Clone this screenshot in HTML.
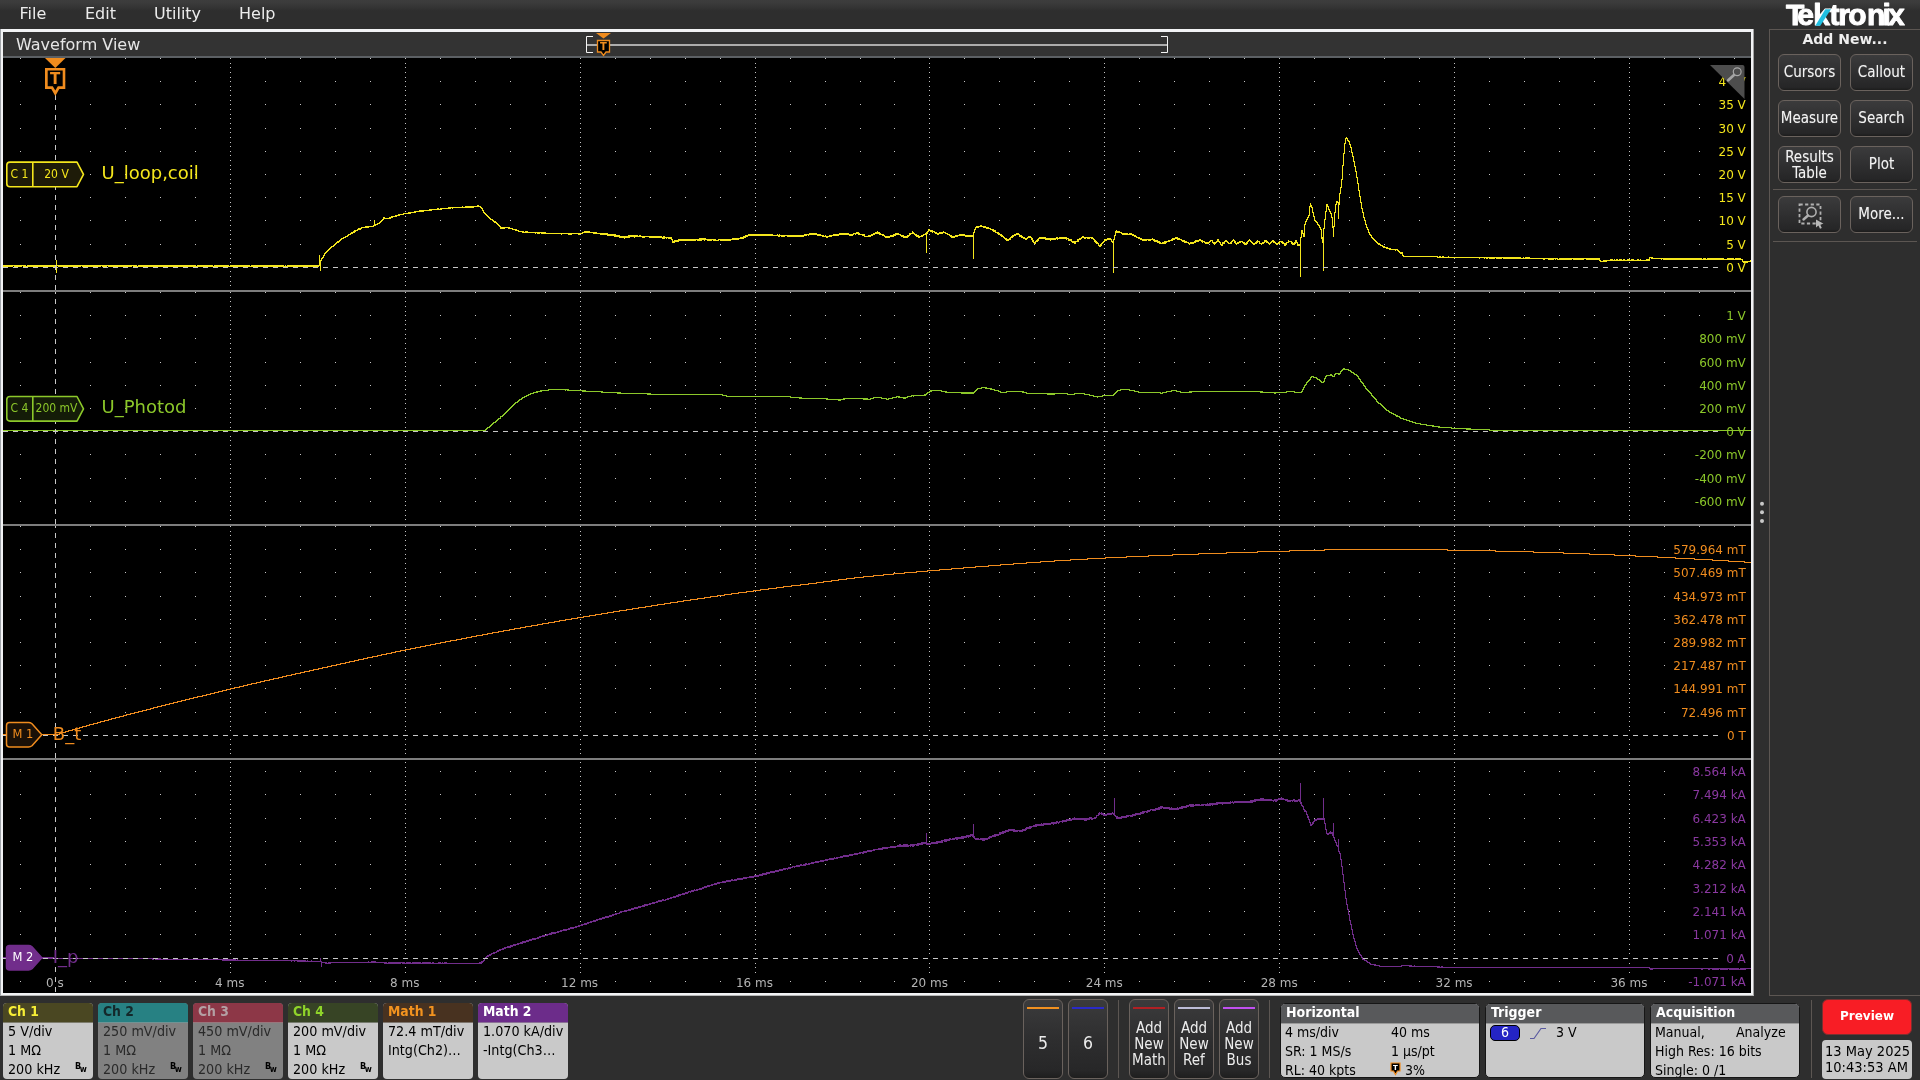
<!DOCTYPE html>
<html lang="en">
<head>
<meta charset="utf-8">
<title>Tektronix Waveform View</title>
<style>
*{box-sizing:border-box;margin:0;padding:0}
html,body{width:1920px;height:1080px;overflow:hidden;background:#2e2e2e}
body{position:relative;font-family:"DejaVu Sans","Liberation Sans",sans-serif;color:#fff;font-size:14px}
.abs{position:absolute}
.cd{font-family:"DejaVu Sans Condensed","DejaVu Sans",sans-serif}
#menubar{left:0;top:0;width:1920px;height:29px;background:linear-gradient(#3d3d3d 0,#3b3b3b 3px,#2e2e2e 11px)}
#menubar span{position:absolute;top:4px;font-size:16px;line-height:19px;color:#ececec}
#frame{left:0;top:29px;width:1754px;height:967px;background:#f2f3f5;border-left:1px solid #a0a4a8;border-right:1px solid #a4a4a4;border-bottom:1px solid #b8b8b8}
#titlebar{left:3px;top:32px;width:1748px;height:26px;background:#333;border-bottom:2px solid #5c6064}
#titlebar span{position:absolute;left:13px;top:3px;font-size:16px;line-height:19px;color:#e6e6e6}
#side{left:1769px;top:29px;width:160px;height:967px;border:1px solid #5c5652;border-right:none}
.sbtn{position:absolute;width:63px;height:37px;border:1px solid #6a625d;border-radius:6px;
 background:linear-gradient(#3b3b3c,#2e2e2f 55%,#262627 92%,#1c1c1c);color:#f2f2f2;font-size:15px;line-height:15px;
 font-family:"DejaVu Sans Condensed","DejaVu Sans",sans-serif;display:flex;align-items:center;justify-content:center;text-align:center;text-shadow:0 0 1px rgba(255,255,255,.35)}
.hr{position:absolute;height:1px;background:#5c5652}
.vr{position:absolute;width:1px;background:#5c5652}
.badge{position:absolute;top:1003px;width:90px;height:76px;border-radius:4px;background:#c9c9c9;overflow:hidden;color:#000;
 font-family:"DejaVu Sans Condensed","DejaVu Sans",sans-serif;font-size:14.2px}
.badge .hd{height:19px;padding-left:5px;line-height:17.8px;font-size:13.8px;font-weight:bold;border-bottom:1px solid rgba(160,160,160,.6);height:20px}
.badge .ln{position:absolute;left:5px;white-space:nowrap;line-height:19px}
.badge.off{background:#818181;color:#2a2a2a}
.bw{position:absolute;left:72px;top:58px;font-size:9px;line-height:10px;color:#000;font-weight:bold}
.bw sub{font-size:8.5px;vertical-align:-3px;font-weight:bold;margin-left:-1.5px}
.tbtn{position:absolute;top:999px;width:40px;height:80px;border:1px solid #6a625d;border-radius:6px;
 background:linear-gradient(#3b3b3c,#2e2e2f 50%,#272728 90%,#1e1e1e);color:#ececec;text-align:center}
.tbtn i{position:absolute;left:3px;right:3px;top:7px;height:2px}
.tbtn b{font-weight:normal;position:absolute;left:0;right:0;font-family:"DejaVu Sans Condensed","DejaVu Sans",sans-serif}
.info{position:absolute;top:1003px;height:75px;border:1px solid #161616;border-radius:5px;background:#c9c9c9;overflow:hidden;color:#000;
 font-family:"DejaVu Sans Condensed","DejaVu Sans",sans-serif;font-size:14px}
.info .hd{height:18px;background:#58595b;color:#fff;font-size:14px;font-weight:bold;line-height:17.5px;padding-left:5px;border-bottom:1px solid #9a9a9a;height:20px}
.info span{position:absolute;white-space:nowrap;line-height:18px}
</style>
</head>
<body>
<div id="root" style="position:absolute;left:0;top:0;width:1920px;height:1080px;will-change:transform;transform:translateZ(0)">
<div id="menubar" class="abs"><span style="left:19.5px">File</span><span style="left:85px">Edit</span><span style="left:154px">Utility</span><span style="left:239px">Help</span></div>
<div id="frame" class="abs"></div>
<div id="titlebar" class="abs"><span>Waveform View</span></div>
<svg id="plot" width="1920" height="1080" viewBox="0 0 1920 1080" style="position:absolute;left:0;top:0" font-family="'DejaVu Sans','Liberation Sans',sans-serif" font-size="12">
<rect x="3" y="58" width="1748" height="935" fill="#000"/>
<path d="M20 58.5h1m69 0h1m34 0h1m34 0h1m34 0h1m34 0h1m34 0h1m34 0h1m34 0h1m34 0h1m34 0h1m34 0h1m34 0h1m34 0h1m34 0h1m34 0h1m34 0h1m34 0h1m34 0h1m34 0h1m34 0h1m34 0h1m34 0h1m34 0h1m33 0h1m34 0h1m34 0h1m34 0h1m34 0h1m34 0h1m34 0h1m34 0h1m34 0h1m34 0h1m34 0h1m34 0h1m34 0h1m34 0h1m34 0h1m34 0h1m34 0h1m34 0h1m34 0h1m34 0h1m34 0h1m34 0h1m34 0h1m34 0h1m34 0h1M20 81.5h1m69 0h1m34 0h1m34 0h1m34 0h1m34 0h1m34 0h1m34 0h1m34 0h1m34 0h1m34 0h1m34 0h1m34 0h1m34 0h1m34 0h1m34 0h1m34 0h1m34 0h1m34 0h1m34 0h1m34 0h1m34 0h1m34 0h1m34 0h1m33 0h1m34 0h1m34 0h1m34 0h1m34 0h1m34 0h1m34 0h1m34 0h1m34 0h1m34 0h1m34 0h1m34 0h1m34 0h1m34 0h1m34 0h1m34 0h1m34 0h1m34 0h1m34 0h1m34 0h1m34 0h1m34 0h1m34 0h1m34 0h1m34 0h1M20 104.5h1m69 0h1m34 0h1m34 0h1m34 0h1m34 0h1m34 0h1m34 0h1m34 0h1m34 0h1m34 0h1m34 0h1m34 0h1m34 0h1m34 0h1m34 0h1m34 0h1m34 0h1m34 0h1m34 0h1m34 0h1m34 0h1m34 0h1m34 0h1m33 0h1m34 0h1m34 0h1m34 0h1m34 0h1m34 0h1m34 0h1m34 0h1m34 0h1m34 0h1m34 0h1m34 0h1m34 0h1m34 0h1m34 0h1m34 0h1m34 0h1m34 0h1m34 0h1m34 0h1m34 0h1m34 0h1m34 0h1m34 0h1m34 0h1M20 128.5h1m69 0h1m34 0h1m34 0h1m34 0h1m34 0h1m34 0h1m34 0h1m34 0h1m34 0h1m34 0h1m34 0h1m34 0h1m34 0h1m34 0h1m34 0h1m34 0h1m34 0h1m34 0h1m34 0h1m34 0h1m34 0h1m34 0h1m34 0h1m33 0h1m34 0h1m34 0h1m34 0h1m34 0h1m34 0h1m34 0h1m34 0h1m34 0h1m34 0h1m34 0h1m34 0h1m34 0h1m34 0h1m34 0h1m34 0h1m34 0h1m34 0h1m34 0h1m34 0h1m34 0h1m34 0h1m34 0h1m34 0h1m34 0h1M20 151.5h1m69 0h1m34 0h1m34 0h1m34 0h1m34 0h1m34 0h1m34 0h1m34 0h1m34 0h1m34 0h1m34 0h1m34 0h1m34 0h1m34 0h1m34 0h1m34 0h1m34 0h1m34 0h1m34 0h1m34 0h1m34 0h1m34 0h1m34 0h1m33 0h1m34 0h1m34 0h1m34 0h1m34 0h1m34 0h1m34 0h1m34 0h1m34 0h1m34 0h1m34 0h1m34 0h1m34 0h1m34 0h1m34 0h1m34 0h1m34 0h1m34 0h1m34 0h1m34 0h1m34 0h1m34 0h1m34 0h1m34 0h1m34 0h1M20 174.5h1m69 0h1m34 0h1m34 0h1m34 0h1m34 0h1m34 0h1m34 0h1m34 0h1m34 0h1m34 0h1m34 0h1m34 0h1m34 0h1m34 0h1m34 0h1m34 0h1m34 0h1m34 0h1m34 0h1m34 0h1m34 0h1m34 0h1m34 0h1m33 0h1m34 0h1m34 0h1m34 0h1m34 0h1m34 0h1m34 0h1m34 0h1m34 0h1m34 0h1m34 0h1m34 0h1m34 0h1m34 0h1m34 0h1m34 0h1m34 0h1m34 0h1m34 0h1m34 0h1m34 0h1m34 0h1m34 0h1m34 0h1m34 0h1M20 197.5h1m69 0h1m34 0h1m34 0h1m34 0h1m34 0h1m34 0h1m34 0h1m34 0h1m34 0h1m34 0h1m34 0h1m34 0h1m34 0h1m34 0h1m34 0h1m34 0h1m34 0h1m34 0h1m34 0h1m34 0h1m34 0h1m34 0h1m34 0h1m33 0h1m34 0h1m34 0h1m34 0h1m34 0h1m34 0h1m34 0h1m34 0h1m34 0h1m34 0h1m34 0h1m34 0h1m34 0h1m34 0h1m34 0h1m34 0h1m34 0h1m34 0h1m34 0h1m34 0h1m34 0h1m34 0h1m34 0h1m34 0h1m34 0h1M20 220.5h1m69 0h1m34 0h1m34 0h1m34 0h1m34 0h1m34 0h1m34 0h1m34 0h1m34 0h1m34 0h1m34 0h1m34 0h1m34 0h1m34 0h1m34 0h1m34 0h1m34 0h1m34 0h1m34 0h1m34 0h1m34 0h1m34 0h1m34 0h1m33 0h1m34 0h1m34 0h1m34 0h1m34 0h1m34 0h1m34 0h1m34 0h1m34 0h1m34 0h1m34 0h1m34 0h1m34 0h1m34 0h1m34 0h1m34 0h1m34 0h1m34 0h1m34 0h1m34 0h1m34 0h1m34 0h1m34 0h1m34 0h1m34 0h1M20 244.5h1m69 0h1m34 0h1m34 0h1m34 0h1m34 0h1m34 0h1m34 0h1m34 0h1m34 0h1m34 0h1m34 0h1m34 0h1m34 0h1m34 0h1m34 0h1m34 0h1m34 0h1m34 0h1m34 0h1m34 0h1m34 0h1m34 0h1m34 0h1m33 0h1m34 0h1m34 0h1m34 0h1m34 0h1m34 0h1m34 0h1m34 0h1m34 0h1m34 0h1m34 0h1m34 0h1m34 0h1m34 0h1m34 0h1m34 0h1m34 0h1m34 0h1m34 0h1m34 0h1m34 0h1m34 0h1m34 0h1m34 0h1m34 0h1M230.5 63v1m0 3v1m0 4v1m0 4v1m0 8v1m0 3v1m0 4v1m0 4v1m0 8v1m0 4v1m0 3v1m0 4v1m0 8v1m0 4v1m0 4v1m0 3v1m0 8v1m0 4v1m0 4v1m0 3v1m0 9v1m0 3v1m0 4v1m0 4v1m0 8v1m0 3v1m0 4v1m0 4v1m0 8v1m0 4v1m0 3v1m0 4v1m0 8v1m0 4v1m0 4v1m0 3v1m0 8v1m0 4v1m0 4v1m0 3v1M405.5 63v1m0 3v1m0 4v1m0 4v1m0 8v1m0 3v1m0 4v1m0 4v1m0 8v1m0 4v1m0 3v1m0 4v1m0 8v1m0 4v1m0 4v1m0 3v1m0 8v1m0 4v1m0 4v1m0 3v1m0 9v1m0 3v1m0 4v1m0 4v1m0 8v1m0 3v1m0 4v1m0 4v1m0 8v1m0 4v1m0 3v1m0 4v1m0 8v1m0 4v1m0 4v1m0 3v1m0 8v1m0 4v1m0 4v1m0 3v1M580.5 63v1m0 3v1m0 4v1m0 4v1m0 8v1m0 3v1m0 4v1m0 4v1m0 8v1m0 4v1m0 3v1m0 4v1m0 8v1m0 4v1m0 4v1m0 3v1m0 8v1m0 4v1m0 4v1m0 3v1m0 9v1m0 3v1m0 4v1m0 4v1m0 8v1m0 3v1m0 4v1m0 4v1m0 8v1m0 4v1m0 3v1m0 4v1m0 8v1m0 4v1m0 4v1m0 3v1m0 8v1m0 4v1m0 4v1m0 3v1M755.5 63v1m0 3v1m0 4v1m0 4v1m0 8v1m0 3v1m0 4v1m0 4v1m0 8v1m0 4v1m0 3v1m0 4v1m0 8v1m0 4v1m0 4v1m0 3v1m0 8v1m0 4v1m0 4v1m0 3v1m0 9v1m0 3v1m0 4v1m0 4v1m0 8v1m0 3v1m0 4v1m0 4v1m0 8v1m0 4v1m0 3v1m0 4v1m0 8v1m0 4v1m0 4v1m0 3v1m0 8v1m0 4v1m0 4v1m0 3v1M929.5 63v1m0 3v1m0 4v1m0 4v1m0 8v1m0 3v1m0 4v1m0 4v1m0 8v1m0 4v1m0 3v1m0 4v1m0 8v1m0 4v1m0 4v1m0 3v1m0 8v1m0 4v1m0 4v1m0 3v1m0 9v1m0 3v1m0 4v1m0 4v1m0 8v1m0 3v1m0 4v1m0 4v1m0 8v1m0 4v1m0 3v1m0 4v1m0 8v1m0 4v1m0 4v1m0 3v1m0 8v1m0 4v1m0 4v1m0 3v1M1104.5 63v1m0 3v1m0 4v1m0 4v1m0 8v1m0 3v1m0 4v1m0 4v1m0 8v1m0 4v1m0 3v1m0 4v1m0 8v1m0 4v1m0 4v1m0 3v1m0 8v1m0 4v1m0 4v1m0 3v1m0 9v1m0 3v1m0 4v1m0 4v1m0 8v1m0 3v1m0 4v1m0 4v1m0 8v1m0 4v1m0 3v1m0 4v1m0 8v1m0 4v1m0 4v1m0 3v1m0 8v1m0 4v1m0 4v1m0 3v1M1279.5 63v1m0 3v1m0 4v1m0 4v1m0 8v1m0 3v1m0 4v1m0 4v1m0 8v1m0 4v1m0 3v1m0 4v1m0 8v1m0 4v1m0 4v1m0 3v1m0 8v1m0 4v1m0 4v1m0 3v1m0 9v1m0 3v1m0 4v1m0 4v1m0 8v1m0 3v1m0 4v1m0 4v1m0 8v1m0 4v1m0 3v1m0 4v1m0 8v1m0 4v1m0 4v1m0 3v1m0 8v1m0 4v1m0 4v1m0 3v1M1454.5 63v1m0 3v1m0 4v1m0 4v1m0 8v1m0 3v1m0 4v1m0 4v1m0 8v1m0 4v1m0 3v1m0 4v1m0 8v1m0 4v1m0 4v1m0 3v1m0 8v1m0 4v1m0 4v1m0 3v1m0 9v1m0 3v1m0 4v1m0 4v1m0 8v1m0 3v1m0 4v1m0 4v1m0 8v1m0 4v1m0 3v1m0 4v1m0 8v1m0 4v1m0 4v1m0 3v1m0 8v1m0 4v1m0 4v1m0 3v1M1629.5 63v1m0 3v1m0 4v1m0 4v1m0 8v1m0 3v1m0 4v1m0 4v1m0 8v1m0 4v1m0 3v1m0 4v1m0 8v1m0 4v1m0 4v1m0 3v1m0 8v1m0 4v1m0 4v1m0 3v1m0 9v1m0 3v1m0 4v1m0 4v1m0 8v1m0 3v1m0 4v1m0 4v1m0 8v1m0 4v1m0 3v1m0 4v1m0 8v1m0 4v1m0 4v1m0 3v1m0 8v1m0 4v1m0 4v1m0 3v1M20 292.5h1m69 0h1m34 0h1m34 0h1m34 0h1m34 0h1m34 0h1m34 0h1m34 0h1m34 0h1m34 0h1m34 0h1m34 0h1m34 0h1m34 0h1m34 0h1m34 0h1m34 0h1m34 0h1m34 0h1m34 0h1m34 0h1m34 0h1m34 0h1m33 0h1m34 0h1m34 0h1m34 0h1m34 0h1m34 0h1m34 0h1m34 0h1m34 0h1m34 0h1m34 0h1m34 0h1m34 0h1m34 0h1m34 0h1m34 0h1m34 0h1m34 0h1m34 0h1m34 0h1m34 0h1m34 0h1m34 0h1m34 0h1m34 0h1M20 315.5h1m69 0h1m34 0h1m34 0h1m34 0h1m34 0h1m34 0h1m34 0h1m34 0h1m34 0h1m34 0h1m34 0h1m34 0h1m34 0h1m34 0h1m34 0h1m34 0h1m34 0h1m34 0h1m34 0h1m34 0h1m34 0h1m34 0h1m34 0h1m33 0h1m34 0h1m34 0h1m34 0h1m34 0h1m34 0h1m34 0h1m34 0h1m34 0h1m34 0h1m34 0h1m34 0h1m34 0h1m34 0h1m34 0h1m34 0h1m34 0h1m34 0h1m34 0h1m34 0h1m34 0h1m34 0h1m34 0h1m34 0h1m34 0h1M20 338.5h1m69 0h1m34 0h1m34 0h1m34 0h1m34 0h1m34 0h1m34 0h1m34 0h1m34 0h1m34 0h1m34 0h1m34 0h1m34 0h1m34 0h1m34 0h1m34 0h1m34 0h1m34 0h1m34 0h1m34 0h1m34 0h1m34 0h1m34 0h1m33 0h1m34 0h1m34 0h1m34 0h1m34 0h1m34 0h1m34 0h1m34 0h1m34 0h1m34 0h1m34 0h1m34 0h1m34 0h1m34 0h1m34 0h1m34 0h1m34 0h1m34 0h1m34 0h1m34 0h1m34 0h1m34 0h1m34 0h1m34 0h1m34 0h1M20 362.5h1m69 0h1m34 0h1m34 0h1m34 0h1m34 0h1m34 0h1m34 0h1m34 0h1m34 0h1m34 0h1m34 0h1m34 0h1m34 0h1m34 0h1m34 0h1m34 0h1m34 0h1m34 0h1m34 0h1m34 0h1m34 0h1m34 0h1m34 0h1m33 0h1m34 0h1m34 0h1m34 0h1m34 0h1m34 0h1m34 0h1m34 0h1m34 0h1m34 0h1m34 0h1m34 0h1m34 0h1m34 0h1m34 0h1m34 0h1m34 0h1m34 0h1m34 0h1m34 0h1m34 0h1m34 0h1m34 0h1m34 0h1m34 0h1M20 385.5h1m69 0h1m34 0h1m34 0h1m34 0h1m34 0h1m34 0h1m34 0h1m34 0h1m34 0h1m34 0h1m34 0h1m34 0h1m34 0h1m34 0h1m34 0h1m34 0h1m34 0h1m34 0h1m34 0h1m34 0h1m34 0h1m34 0h1m34 0h1m33 0h1m34 0h1m34 0h1m34 0h1m34 0h1m34 0h1m34 0h1m34 0h1m34 0h1m34 0h1m34 0h1m34 0h1m34 0h1m34 0h1m34 0h1m34 0h1m34 0h1m34 0h1m34 0h1m34 0h1m34 0h1m34 0h1m34 0h1m34 0h1m34 0h1M20 408.5h1m69 0h1m34 0h1m34 0h1m34 0h1m34 0h1m34 0h1m34 0h1m34 0h1m34 0h1m34 0h1m34 0h1m34 0h1m34 0h1m34 0h1m34 0h1m34 0h1m34 0h1m34 0h1m34 0h1m34 0h1m34 0h1m34 0h1m34 0h1m33 0h1m34 0h1m34 0h1m34 0h1m34 0h1m34 0h1m34 0h1m34 0h1m34 0h1m34 0h1m34 0h1m34 0h1m34 0h1m34 0h1m34 0h1m34 0h1m34 0h1m34 0h1m34 0h1m34 0h1m34 0h1m34 0h1m34 0h1m34 0h1m34 0h1M20 454.5h1m69 0h1m34 0h1m34 0h1m34 0h1m34 0h1m34 0h1m34 0h1m34 0h1m34 0h1m34 0h1m34 0h1m34 0h1m34 0h1m34 0h1m34 0h1m34 0h1m34 0h1m34 0h1m34 0h1m34 0h1m34 0h1m34 0h1m34 0h1m33 0h1m34 0h1m34 0h1m34 0h1m34 0h1m34 0h1m34 0h1m34 0h1m34 0h1m34 0h1m34 0h1m34 0h1m34 0h1m34 0h1m34 0h1m34 0h1m34 0h1m34 0h1m34 0h1m34 0h1m34 0h1m34 0h1m34 0h1m34 0h1m34 0h1M20 478.5h1m69 0h1m34 0h1m34 0h1m34 0h1m34 0h1m34 0h1m34 0h1m34 0h1m34 0h1m34 0h1m34 0h1m34 0h1m34 0h1m34 0h1m34 0h1m34 0h1m34 0h1m34 0h1m34 0h1m34 0h1m34 0h1m34 0h1m34 0h1m33 0h1m34 0h1m34 0h1m34 0h1m34 0h1m34 0h1m34 0h1m34 0h1m34 0h1m34 0h1m34 0h1m34 0h1m34 0h1m34 0h1m34 0h1m34 0h1m34 0h1m34 0h1m34 0h1m34 0h1m34 0h1m34 0h1m34 0h1m34 0h1m34 0h1M20 501.5h1m69 0h1m34 0h1m34 0h1m34 0h1m34 0h1m34 0h1m34 0h1m34 0h1m34 0h1m34 0h1m34 0h1m34 0h1m34 0h1m34 0h1m34 0h1m34 0h1m34 0h1m34 0h1m34 0h1m34 0h1m34 0h1m34 0h1m34 0h1m33 0h1m34 0h1m34 0h1m34 0h1m34 0h1m34 0h1m34 0h1m34 0h1m34 0h1m34 0h1m34 0h1m34 0h1m34 0h1m34 0h1m34 0h1m34 0h1m34 0h1m34 0h1m34 0h1m34 0h1m34 0h1m34 0h1m34 0h1m34 0h1m34 0h1M230.5 297v1m0 3v1m0 4v1m0 4v1m0 8v1m0 3v1m0 4v1m0 4v1m0 8v1m0 4v1m0 3v1m0 4v1m0 8v1m0 4v1m0 4v1m0 3v1m0 8v1m0 4v1m0 4v1m0 3v1m0 9v1m0 3v1m0 4v1m0 4v1m0 8v1m0 3v1m0 4v1m0 4v1m0 8v1m0 4v1m0 3v1m0 4v1m0 8v1m0 4v1m0 4v1m0 3v1m0 8v1m0 4v1m0 4v1m0 3v1M405.5 297v1m0 3v1m0 4v1m0 4v1m0 8v1m0 3v1m0 4v1m0 4v1m0 8v1m0 4v1m0 3v1m0 4v1m0 8v1m0 4v1m0 4v1m0 3v1m0 8v1m0 4v1m0 4v1m0 3v1m0 9v1m0 3v1m0 4v1m0 4v1m0 8v1m0 3v1m0 4v1m0 4v1m0 8v1m0 4v1m0 3v1m0 4v1m0 8v1m0 4v1m0 4v1m0 3v1m0 8v1m0 4v1m0 4v1m0 3v1M580.5 297v1m0 3v1m0 4v1m0 4v1m0 8v1m0 3v1m0 4v1m0 4v1m0 8v1m0 4v1m0 3v1m0 4v1m0 8v1m0 4v1m0 4v1m0 3v1m0 8v1m0 4v1m0 4v1m0 3v1m0 9v1m0 3v1m0 4v1m0 4v1m0 8v1m0 3v1m0 4v1m0 4v1m0 8v1m0 4v1m0 3v1m0 4v1m0 8v1m0 4v1m0 4v1m0 3v1m0 8v1m0 4v1m0 4v1m0 3v1M755.5 297v1m0 3v1m0 4v1m0 4v1m0 8v1m0 3v1m0 4v1m0 4v1m0 8v1m0 4v1m0 3v1m0 4v1m0 8v1m0 4v1m0 4v1m0 3v1m0 8v1m0 4v1m0 4v1m0 3v1m0 9v1m0 3v1m0 4v1m0 4v1m0 8v1m0 3v1m0 4v1m0 4v1m0 8v1m0 4v1m0 3v1m0 4v1m0 8v1m0 4v1m0 4v1m0 3v1m0 8v1m0 4v1m0 4v1m0 3v1M929.5 297v1m0 3v1m0 4v1m0 4v1m0 8v1m0 3v1m0 4v1m0 4v1m0 8v1m0 4v1m0 3v1m0 4v1m0 8v1m0 4v1m0 4v1m0 3v1m0 8v1m0 4v1m0 4v1m0 3v1m0 9v1m0 3v1m0 4v1m0 4v1m0 8v1m0 3v1m0 4v1m0 4v1m0 8v1m0 4v1m0 3v1m0 4v1m0 8v1m0 4v1m0 4v1m0 3v1m0 8v1m0 4v1m0 4v1m0 3v1M1104.5 297v1m0 3v1m0 4v1m0 4v1m0 8v1m0 3v1m0 4v1m0 4v1m0 8v1m0 4v1m0 3v1m0 4v1m0 8v1m0 4v1m0 4v1m0 3v1m0 8v1m0 4v1m0 4v1m0 3v1m0 9v1m0 3v1m0 4v1m0 4v1m0 8v1m0 3v1m0 4v1m0 4v1m0 8v1m0 4v1m0 3v1m0 4v1m0 8v1m0 4v1m0 4v1m0 3v1m0 8v1m0 4v1m0 4v1m0 3v1M1279.5 297v1m0 3v1m0 4v1m0 4v1m0 8v1m0 3v1m0 4v1m0 4v1m0 8v1m0 4v1m0 3v1m0 4v1m0 8v1m0 4v1m0 4v1m0 3v1m0 8v1m0 4v1m0 4v1m0 3v1m0 9v1m0 3v1m0 4v1m0 4v1m0 8v1m0 3v1m0 4v1m0 4v1m0 8v1m0 4v1m0 3v1m0 4v1m0 8v1m0 4v1m0 4v1m0 3v1m0 8v1m0 4v1m0 4v1m0 3v1M1454.5 297v1m0 3v1m0 4v1m0 4v1m0 8v1m0 3v1m0 4v1m0 4v1m0 8v1m0 4v1m0 3v1m0 4v1m0 8v1m0 4v1m0 4v1m0 3v1m0 8v1m0 4v1m0 4v1m0 3v1m0 9v1m0 3v1m0 4v1m0 4v1m0 8v1m0 3v1m0 4v1m0 4v1m0 8v1m0 4v1m0 3v1m0 4v1m0 8v1m0 4v1m0 4v1m0 3v1m0 8v1m0 4v1m0 4v1m0 3v1M1629.5 297v1m0 3v1m0 4v1m0 4v1m0 8v1m0 3v1m0 4v1m0 4v1m0 8v1m0 4v1m0 3v1m0 4v1m0 8v1m0 4v1m0 4v1m0 3v1m0 8v1m0 4v1m0 4v1m0 3v1m0 9v1m0 3v1m0 4v1m0 4v1m0 8v1m0 3v1m0 4v1m0 4v1m0 8v1m0 4v1m0 3v1m0 4v1m0 8v1m0 4v1m0 4v1m0 3v1m0 8v1m0 4v1m0 4v1m0 3v1M20 526.5h1m69 0h1m34 0h1m34 0h1m34 0h1m34 0h1m34 0h1m34 0h1m34 0h1m34 0h1m34 0h1m34 0h1m34 0h1m34 0h1m34 0h1m34 0h1m34 0h1m34 0h1m34 0h1m34 0h1m34 0h1m34 0h1m34 0h1m34 0h1m33 0h1m34 0h1m34 0h1m34 0h1m34 0h1m34 0h1m34 0h1m34 0h1m34 0h1m34 0h1m34 0h1m34 0h1m34 0h1m34 0h1m34 0h1m34 0h1m34 0h1m34 0h1m34 0h1m34 0h1m34 0h1m34 0h1m34 0h1m34 0h1m34 0h1M20 549.5h1m69 0h1m34 0h1m34 0h1m34 0h1m34 0h1m34 0h1m34 0h1m34 0h1m34 0h1m34 0h1m34 0h1m34 0h1m34 0h1m34 0h1m34 0h1m34 0h1m34 0h1m34 0h1m34 0h1m34 0h1m34 0h1m34 0h1m34 0h1m33 0h1m34 0h1m34 0h1m34 0h1m34 0h1m34 0h1m34 0h1m34 0h1m34 0h1m34 0h1m34 0h1m34 0h1m34 0h1m34 0h1m34 0h1m34 0h1m34 0h1m34 0h1m34 0h1m34 0h1m34 0h1m34 0h1m34 0h1m34 0h1m34 0h1M20 572.5h1m69 0h1m34 0h1m34 0h1m34 0h1m34 0h1m34 0h1m34 0h1m34 0h1m34 0h1m34 0h1m34 0h1m34 0h1m34 0h1m34 0h1m34 0h1m34 0h1m34 0h1m34 0h1m34 0h1m34 0h1m34 0h1m34 0h1m34 0h1m33 0h1m34 0h1m34 0h1m34 0h1m34 0h1m34 0h1m34 0h1m34 0h1m34 0h1m34 0h1m34 0h1m34 0h1m34 0h1m34 0h1m34 0h1m34 0h1m34 0h1m34 0h1m34 0h1m34 0h1m34 0h1m34 0h1m34 0h1m34 0h1m34 0h1M20 596.5h1m69 0h1m34 0h1m34 0h1m34 0h1m34 0h1m34 0h1m34 0h1m34 0h1m34 0h1m34 0h1m34 0h1m34 0h1m34 0h1m34 0h1m34 0h1m34 0h1m34 0h1m34 0h1m34 0h1m34 0h1m34 0h1m34 0h1m34 0h1m33 0h1m34 0h1m34 0h1m34 0h1m34 0h1m34 0h1m34 0h1m34 0h1m34 0h1m34 0h1m34 0h1m34 0h1m34 0h1m34 0h1m34 0h1m34 0h1m34 0h1m34 0h1m34 0h1m34 0h1m34 0h1m34 0h1m34 0h1m34 0h1m34 0h1M20 619.5h1m69 0h1m34 0h1m34 0h1m34 0h1m34 0h1m34 0h1m34 0h1m34 0h1m34 0h1m34 0h1m34 0h1m34 0h1m34 0h1m34 0h1m34 0h1m34 0h1m34 0h1m34 0h1m34 0h1m34 0h1m34 0h1m34 0h1m34 0h1m33 0h1m34 0h1m34 0h1m34 0h1m34 0h1m34 0h1m34 0h1m34 0h1m34 0h1m34 0h1m34 0h1m34 0h1m34 0h1m34 0h1m34 0h1m34 0h1m34 0h1m34 0h1m34 0h1m34 0h1m34 0h1m34 0h1m34 0h1m34 0h1m34 0h1M20 642.5h1m69 0h1m34 0h1m34 0h1m34 0h1m34 0h1m34 0h1m34 0h1m34 0h1m34 0h1m34 0h1m34 0h1m34 0h1m34 0h1m34 0h1m34 0h1m34 0h1m34 0h1m34 0h1m34 0h1m34 0h1m34 0h1m34 0h1m34 0h1m33 0h1m34 0h1m34 0h1m34 0h1m34 0h1m34 0h1m34 0h1m34 0h1m34 0h1m34 0h1m34 0h1m34 0h1m34 0h1m34 0h1m34 0h1m34 0h1m34 0h1m34 0h1m34 0h1m34 0h1m34 0h1m34 0h1m34 0h1m34 0h1m34 0h1M20 665.5h1m69 0h1m34 0h1m34 0h1m34 0h1m34 0h1m34 0h1m34 0h1m34 0h1m34 0h1m34 0h1m34 0h1m34 0h1m34 0h1m34 0h1m34 0h1m34 0h1m34 0h1m34 0h1m34 0h1m34 0h1m34 0h1m34 0h1m34 0h1m33 0h1m34 0h1m34 0h1m34 0h1m34 0h1m34 0h1m34 0h1m34 0h1m34 0h1m34 0h1m34 0h1m34 0h1m34 0h1m34 0h1m34 0h1m34 0h1m34 0h1m34 0h1m34 0h1m34 0h1m34 0h1m34 0h1m34 0h1m34 0h1m34 0h1M20 688.5h1m69 0h1m34 0h1m34 0h1m34 0h1m34 0h1m34 0h1m34 0h1m34 0h1m34 0h1m34 0h1m34 0h1m34 0h1m34 0h1m34 0h1m34 0h1m34 0h1m34 0h1m34 0h1m34 0h1m34 0h1m34 0h1m34 0h1m34 0h1m33 0h1m34 0h1m34 0h1m34 0h1m34 0h1m34 0h1m34 0h1m34 0h1m34 0h1m34 0h1m34 0h1m34 0h1m34 0h1m34 0h1m34 0h1m34 0h1m34 0h1m34 0h1m34 0h1m34 0h1m34 0h1m34 0h1m34 0h1m34 0h1m34 0h1M20 712.5h1m69 0h1m34 0h1m34 0h1m34 0h1m34 0h1m34 0h1m34 0h1m34 0h1m34 0h1m34 0h1m34 0h1m34 0h1m34 0h1m34 0h1m34 0h1m34 0h1m34 0h1m34 0h1m34 0h1m34 0h1m34 0h1m34 0h1m34 0h1m33 0h1m34 0h1m34 0h1m34 0h1m34 0h1m34 0h1m34 0h1m34 0h1m34 0h1m34 0h1m34 0h1m34 0h1m34 0h1m34 0h1m34 0h1m34 0h1m34 0h1m34 0h1m34 0h1m34 0h1m34 0h1m34 0h1m34 0h1m34 0h1m34 0h1M230.5 531v1m0 3v1m0 4v1m0 4v1m0 8v1m0 3v1m0 4v1m0 4v1m0 8v1m0 4v1m0 3v1m0 4v1m0 8v1m0 4v1m0 4v1m0 3v1m0 8v1m0 4v1m0 4v1m0 3v1m0 9v1m0 3v1m0 4v1m0 4v1m0 8v1m0 3v1m0 4v1m0 4v1m0 8v1m0 4v1m0 3v1m0 4v1m0 8v1m0 4v1m0 4v1m0 3v1m0 8v1m0 4v1m0 4v1m0 3v1M405.5 531v1m0 3v1m0 4v1m0 4v1m0 8v1m0 3v1m0 4v1m0 4v1m0 8v1m0 4v1m0 3v1m0 4v1m0 8v1m0 4v1m0 4v1m0 3v1m0 8v1m0 4v1m0 4v1m0 3v1m0 9v1m0 3v1m0 4v1m0 4v1m0 8v1m0 3v1m0 4v1m0 4v1m0 8v1m0 4v1m0 3v1m0 4v1m0 8v1m0 4v1m0 4v1m0 3v1m0 8v1m0 4v1m0 4v1m0 3v1M580.5 531v1m0 3v1m0 4v1m0 4v1m0 8v1m0 3v1m0 4v1m0 4v1m0 8v1m0 4v1m0 3v1m0 4v1m0 8v1m0 4v1m0 4v1m0 3v1m0 8v1m0 4v1m0 4v1m0 3v1m0 9v1m0 3v1m0 4v1m0 4v1m0 8v1m0 3v1m0 4v1m0 4v1m0 8v1m0 4v1m0 3v1m0 4v1m0 8v1m0 4v1m0 4v1m0 3v1m0 8v1m0 4v1m0 4v1m0 3v1M755.5 531v1m0 3v1m0 4v1m0 4v1m0 8v1m0 3v1m0 4v1m0 4v1m0 8v1m0 4v1m0 3v1m0 4v1m0 8v1m0 4v1m0 4v1m0 3v1m0 8v1m0 4v1m0 4v1m0 3v1m0 9v1m0 3v1m0 4v1m0 4v1m0 8v1m0 3v1m0 4v1m0 4v1m0 8v1m0 4v1m0 3v1m0 4v1m0 8v1m0 4v1m0 4v1m0 3v1m0 8v1m0 4v1m0 4v1m0 3v1M929.5 531v1m0 3v1m0 4v1m0 4v1m0 8v1m0 3v1m0 4v1m0 4v1m0 8v1m0 4v1m0 3v1m0 4v1m0 8v1m0 4v1m0 4v1m0 3v1m0 8v1m0 4v1m0 4v1m0 3v1m0 9v1m0 3v1m0 4v1m0 4v1m0 8v1m0 3v1m0 4v1m0 4v1m0 8v1m0 4v1m0 3v1m0 4v1m0 8v1m0 4v1m0 4v1m0 3v1m0 8v1m0 4v1m0 4v1m0 3v1M1104.5 531v1m0 3v1m0 4v1m0 4v1m0 8v1m0 3v1m0 4v1m0 4v1m0 8v1m0 4v1m0 3v1m0 4v1m0 8v1m0 4v1m0 4v1m0 3v1m0 8v1m0 4v1m0 4v1m0 3v1m0 9v1m0 3v1m0 4v1m0 4v1m0 8v1m0 3v1m0 4v1m0 4v1m0 8v1m0 4v1m0 3v1m0 4v1m0 8v1m0 4v1m0 4v1m0 3v1m0 8v1m0 4v1m0 4v1m0 3v1M1279.5 531v1m0 3v1m0 4v1m0 4v1m0 8v1m0 3v1m0 4v1m0 4v1m0 8v1m0 4v1m0 3v1m0 4v1m0 8v1m0 4v1m0 4v1m0 3v1m0 8v1m0 4v1m0 4v1m0 3v1m0 9v1m0 3v1m0 4v1m0 4v1m0 8v1m0 3v1m0 4v1m0 4v1m0 8v1m0 4v1m0 3v1m0 4v1m0 8v1m0 4v1m0 4v1m0 3v1m0 8v1m0 4v1m0 4v1m0 3v1M1454.5 531v1m0 3v1m0 4v1m0 4v1m0 8v1m0 3v1m0 4v1m0 4v1m0 8v1m0 4v1m0 3v1m0 4v1m0 8v1m0 4v1m0 4v1m0 3v1m0 8v1m0 4v1m0 4v1m0 3v1m0 9v1m0 3v1m0 4v1m0 4v1m0 8v1m0 3v1m0 4v1m0 4v1m0 8v1m0 4v1m0 3v1m0 4v1m0 8v1m0 4v1m0 4v1m0 3v1m0 8v1m0 4v1m0 4v1m0 3v1M1629.5 531v1m0 3v1m0 4v1m0 4v1m0 8v1m0 3v1m0 4v1m0 4v1m0 8v1m0 4v1m0 3v1m0 4v1m0 8v1m0 4v1m0 4v1m0 3v1m0 8v1m0 4v1m0 4v1m0 3v1m0 9v1m0 3v1m0 4v1m0 4v1m0 8v1m0 3v1m0 4v1m0 4v1m0 8v1m0 4v1m0 3v1m0 4v1m0 8v1m0 4v1m0 4v1m0 3v1m0 8v1m0 4v1m0 4v1m0 3v1M20 771.5h1m69 0h1m34 0h1m34 0h1m34 0h1m34 0h1m34 0h1m34 0h1m34 0h1m34 0h1m34 0h1m34 0h1m34 0h1m34 0h1m34 0h1m34 0h1m34 0h1m34 0h1m34 0h1m34 0h1m34 0h1m34 0h1m34 0h1m34 0h1m33 0h1m34 0h1m34 0h1m34 0h1m34 0h1m34 0h1m34 0h1m34 0h1m34 0h1m34 0h1m34 0h1m34 0h1m34 0h1m34 0h1m34 0h1m34 0h1m34 0h1m34 0h1m34 0h1m34 0h1m34 0h1m34 0h1m34 0h1m34 0h1m34 0h1M20 794.5h1m69 0h1m34 0h1m34 0h1m34 0h1m34 0h1m34 0h1m34 0h1m34 0h1m34 0h1m34 0h1m34 0h1m34 0h1m34 0h1m34 0h1m34 0h1m34 0h1m34 0h1m34 0h1m34 0h1m34 0h1m34 0h1m34 0h1m34 0h1m33 0h1m34 0h1m34 0h1m34 0h1m34 0h1m34 0h1m34 0h1m34 0h1m34 0h1m34 0h1m34 0h1m34 0h1m34 0h1m34 0h1m34 0h1m34 0h1m34 0h1m34 0h1m34 0h1m34 0h1m34 0h1m34 0h1m34 0h1m34 0h1m34 0h1M20 818.5h1m69 0h1m34 0h1m34 0h1m34 0h1m34 0h1m34 0h1m34 0h1m34 0h1m34 0h1m34 0h1m34 0h1m34 0h1m34 0h1m34 0h1m34 0h1m34 0h1m34 0h1m34 0h1m34 0h1m34 0h1m34 0h1m34 0h1m34 0h1m33 0h1m34 0h1m34 0h1m34 0h1m34 0h1m34 0h1m34 0h1m34 0h1m34 0h1m34 0h1m34 0h1m34 0h1m34 0h1m34 0h1m34 0h1m34 0h1m34 0h1m34 0h1m34 0h1m34 0h1m34 0h1m34 0h1m34 0h1m34 0h1m34 0h1M20 841.5h1m69 0h1m34 0h1m34 0h1m34 0h1m34 0h1m34 0h1m34 0h1m34 0h1m34 0h1m34 0h1m34 0h1m34 0h1m34 0h1m34 0h1m34 0h1m34 0h1m34 0h1m34 0h1m34 0h1m34 0h1m34 0h1m34 0h1m34 0h1m33 0h1m34 0h1m34 0h1m34 0h1m34 0h1m34 0h1m34 0h1m34 0h1m34 0h1m34 0h1m34 0h1m34 0h1m34 0h1m34 0h1m34 0h1m34 0h1m34 0h1m34 0h1m34 0h1m34 0h1m34 0h1m34 0h1m34 0h1m34 0h1m34 0h1M20 864.5h1m69 0h1m34 0h1m34 0h1m34 0h1m34 0h1m34 0h1m34 0h1m34 0h1m34 0h1m34 0h1m34 0h1m34 0h1m34 0h1m34 0h1m34 0h1m34 0h1m34 0h1m34 0h1m34 0h1m34 0h1m34 0h1m34 0h1m34 0h1m33 0h1m34 0h1m34 0h1m34 0h1m34 0h1m34 0h1m34 0h1m34 0h1m34 0h1m34 0h1m34 0h1m34 0h1m34 0h1m34 0h1m34 0h1m34 0h1m34 0h1m34 0h1m34 0h1m34 0h1m34 0h1m34 0h1m34 0h1m34 0h1m34 0h1M20 888.5h1m69 0h1m34 0h1m34 0h1m34 0h1m34 0h1m34 0h1m34 0h1m34 0h1m34 0h1m34 0h1m34 0h1m34 0h1m34 0h1m34 0h1m34 0h1m34 0h1m34 0h1m34 0h1m34 0h1m34 0h1m34 0h1m34 0h1m34 0h1m33 0h1m34 0h1m34 0h1m34 0h1m34 0h1m34 0h1m34 0h1m34 0h1m34 0h1m34 0h1m34 0h1m34 0h1m34 0h1m34 0h1m34 0h1m34 0h1m34 0h1m34 0h1m34 0h1m34 0h1m34 0h1m34 0h1m34 0h1m34 0h1m34 0h1M20 911.5h1m69 0h1m34 0h1m34 0h1m34 0h1m34 0h1m34 0h1m34 0h1m34 0h1m34 0h1m34 0h1m34 0h1m34 0h1m34 0h1m34 0h1m34 0h1m34 0h1m34 0h1m34 0h1m34 0h1m34 0h1m34 0h1m34 0h1m34 0h1m33 0h1m34 0h1m34 0h1m34 0h1m34 0h1m34 0h1m34 0h1m34 0h1m34 0h1m34 0h1m34 0h1m34 0h1m34 0h1m34 0h1m34 0h1m34 0h1m34 0h1m34 0h1m34 0h1m34 0h1m34 0h1m34 0h1m34 0h1m34 0h1m34 0h1M20 934.5h1m69 0h1m34 0h1m34 0h1m34 0h1m34 0h1m34 0h1m34 0h1m34 0h1m34 0h1m34 0h1m34 0h1m34 0h1m34 0h1m34 0h1m34 0h1m34 0h1m34 0h1m34 0h1m34 0h1m34 0h1m34 0h1m34 0h1m34 0h1m33 0h1m34 0h1m34 0h1m34 0h1m34 0h1m34 0h1m34 0h1m34 0h1m34 0h1m34 0h1m34 0h1m34 0h1m34 0h1m34 0h1m34 0h1m34 0h1m34 0h1m34 0h1m34 0h1m34 0h1m34 0h1m34 0h1m34 0h1m34 0h1m34 0h1M20 981.5h1m69 0h1m34 0h1m34 0h1m34 0h1m34 0h1m34 0h1m34 0h1m34 0h1m34 0h1m34 0h1m34 0h1m34 0h1m34 0h1m34 0h1m34 0h1m34 0h1m34 0h1m34 0h1m34 0h1m34 0h1m34 0h1m34 0h1m34 0h1m33 0h1m34 0h1m34 0h1m34 0h1m34 0h1m34 0h1m34 0h1m34 0h1m34 0h1m34 0h1m34 0h1m34 0h1m34 0h1m34 0h1m34 0h1m34 0h1m34 0h1m34 0h1m34 0h1m34 0h1m34 0h1m34 0h1m34 0h1m34 0h1m34 0h1M230.5 762v1m0 4v1m0 8v1m0 4v1m0 3v1m0 4v1m0 8v1m0 4v1m0 4v1m0 3v1m0 9v1m0 3v1m0 4v1m0 4v1m0 8v1m0 4v1m0 3v1m0 4v1m0 8v1m0 4v1m0 4v1m0 3v1m0 9v1m0 3v1m0 4v1m0 4v1m0 8v1m0 4v1m0 3v1m0 4v1m0 8v1m0 4v1m0 4v1m0 3v1m0 9v1m0 3v1m0 4v1m0 4v1m0 8v1m0 4v1M405.5 762v1m0 4v1m0 8v1m0 4v1m0 3v1m0 4v1m0 8v1m0 4v1m0 4v1m0 3v1m0 9v1m0 3v1m0 4v1m0 4v1m0 8v1m0 4v1m0 3v1m0 4v1m0 8v1m0 4v1m0 4v1m0 3v1m0 9v1m0 3v1m0 4v1m0 4v1m0 8v1m0 4v1m0 3v1m0 4v1m0 8v1m0 4v1m0 4v1m0 3v1m0 9v1m0 3v1m0 4v1m0 4v1m0 8v1m0 4v1M580.5 762v1m0 4v1m0 8v1m0 4v1m0 3v1m0 4v1m0 8v1m0 4v1m0 4v1m0 3v1m0 9v1m0 3v1m0 4v1m0 4v1m0 8v1m0 4v1m0 3v1m0 4v1m0 8v1m0 4v1m0 4v1m0 3v1m0 9v1m0 3v1m0 4v1m0 4v1m0 8v1m0 4v1m0 3v1m0 4v1m0 8v1m0 4v1m0 4v1m0 3v1m0 9v1m0 3v1m0 4v1m0 4v1m0 8v1m0 4v1M755.5 762v1m0 4v1m0 8v1m0 4v1m0 3v1m0 4v1m0 8v1m0 4v1m0 4v1m0 3v1m0 9v1m0 3v1m0 4v1m0 4v1m0 8v1m0 4v1m0 3v1m0 4v1m0 8v1m0 4v1m0 4v1m0 3v1m0 9v1m0 3v1m0 4v1m0 4v1m0 8v1m0 4v1m0 3v1m0 4v1m0 8v1m0 4v1m0 4v1m0 3v1m0 9v1m0 3v1m0 4v1m0 4v1m0 8v1m0 4v1M929.5 762v1m0 4v1m0 8v1m0 4v1m0 3v1m0 4v1m0 8v1m0 4v1m0 4v1m0 3v1m0 9v1m0 3v1m0 4v1m0 4v1m0 8v1m0 4v1m0 3v1m0 4v1m0 8v1m0 4v1m0 4v1m0 3v1m0 9v1m0 3v1m0 4v1m0 4v1m0 8v1m0 4v1m0 3v1m0 4v1m0 8v1m0 4v1m0 4v1m0 3v1m0 9v1m0 3v1m0 4v1m0 4v1m0 8v1m0 4v1M1104.5 762v1m0 4v1m0 8v1m0 4v1m0 3v1m0 4v1m0 8v1m0 4v1m0 4v1m0 3v1m0 9v1m0 3v1m0 4v1m0 4v1m0 8v1m0 4v1m0 3v1m0 4v1m0 8v1m0 4v1m0 4v1m0 3v1m0 9v1m0 3v1m0 4v1m0 4v1m0 8v1m0 4v1m0 3v1m0 4v1m0 8v1m0 4v1m0 4v1m0 3v1m0 9v1m0 3v1m0 4v1m0 4v1m0 8v1m0 4v1M1279.5 762v1m0 4v1m0 8v1m0 4v1m0 3v1m0 4v1m0 8v1m0 4v1m0 4v1m0 3v1m0 9v1m0 3v1m0 4v1m0 4v1m0 8v1m0 4v1m0 3v1m0 4v1m0 8v1m0 4v1m0 4v1m0 3v1m0 9v1m0 3v1m0 4v1m0 4v1m0 8v1m0 4v1m0 3v1m0 4v1m0 8v1m0 4v1m0 4v1m0 3v1m0 9v1m0 3v1m0 4v1m0 4v1m0 8v1m0 4v1M1454.5 762v1m0 4v1m0 8v1m0 4v1m0 3v1m0 4v1m0 8v1m0 4v1m0 4v1m0 3v1m0 9v1m0 3v1m0 4v1m0 4v1m0 8v1m0 4v1m0 3v1m0 4v1m0 8v1m0 4v1m0 4v1m0 3v1m0 9v1m0 3v1m0 4v1m0 4v1m0 8v1m0 4v1m0 3v1m0 4v1m0 8v1m0 4v1m0 4v1m0 3v1m0 9v1m0 3v1m0 4v1m0 4v1m0 8v1m0 4v1M1629.5 762v1m0 4v1m0 8v1m0 4v1m0 3v1m0 4v1m0 8v1m0 4v1m0 4v1m0 3v1m0 9v1m0 3v1m0 4v1m0 4v1m0 8v1m0 4v1m0 3v1m0 4v1m0 8v1m0 4v1m0 4v1m0 3v1m0 9v1m0 3v1m0 4v1m0 4v1m0 8v1m0 4v1m0 3v1m0 4v1m0 8v1m0 4v1m0 4v1m0 3v1m0 9v1m0 3v1m0 4v1m0 4v1m0 8v1m0 4v1" stroke="#c4c4c4" stroke-width="1" fill="none" shape-rendering="crispEdges"/>
<rect x="3" y="290" width="1748" height="2" fill="#7d7d7d"/>
<rect x="3" y="524" width="1748" height="2" fill="#7d7d7d"/>
<rect x="3" y="758" width="1748" height="2" fill="#7d7d7d"/>
<rect x="3" y="267" width="1715" height="1" fill="#000"/>
<rect x="3" y="431" width="1715" height="1" fill="#000"/>
<rect x="3" y="735" width="1715" height="1" fill="#000"/>
<rect x="3" y="958" width="1715" height="1" fill="#000"/>
<g text-anchor="end">
<rect x="1716.7" y="75.0" width="30.3" height="13" fill="#000"/>
<text x="1745.8" y="85.9" fill="#f4e61c">40 V</text>
<rect x="1716.7" y="98.0" width="30.3" height="13" fill="#000"/>
<text x="1745.8" y="108.9" fill="#f4e61c">35 V</text>
<rect x="1716.7" y="122.0" width="30.3" height="13" fill="#000"/>
<text x="1745.8" y="132.9" fill="#f4e61c">30 V</text>
<rect x="1716.7" y="145.0" width="30.3" height="13" fill="#000"/>
<text x="1745.8" y="155.9" fill="#f4e61c">25 V</text>
<rect x="1716.7" y="168.0" width="30.3" height="13" fill="#000"/>
<text x="1745.8" y="178.9" fill="#f4e61c">20 V</text>
<rect x="1716.7" y="191.0" width="30.3" height="13" fill="#000"/>
<text x="1745.8" y="201.9" fill="#f4e61c">15 V</text>
<rect x="1716.7" y="214.0" width="30.3" height="13" fill="#000"/>
<text x="1745.8" y="224.9" fill="#f4e61c">10 V</text>
<rect x="1724.3" y="238.0" width="22.7" height="13" fill="#000"/>
<text x="1745.8" y="248.9" fill="#f4e61c">5 V</text>
<rect x="1724.3" y="261.0" width="22.7" height="13" fill="#000"/>
<text x="1745.8" y="271.9" fill="#f4e61c">0 V</text>
<rect x="1724.3" y="309.0" width="22.7" height="13" fill="#000"/>
<text x="1745.8" y="319.9" fill="#8cc82a">1 V</text>
<rect x="1697.4" y="332.0" width="49.6" height="13" fill="#000"/>
<text x="1745.8" y="342.9" fill="#8cc82a">800 mV</text>
<rect x="1697.4" y="356.0" width="49.6" height="13" fill="#000"/>
<text x="1745.8" y="366.9" fill="#8cc82a">600 mV</text>
<rect x="1697.4" y="379.0" width="49.6" height="13" fill="#000"/>
<text x="1745.8" y="389.9" fill="#8cc82a">400 mV</text>
<rect x="1697.4" y="402.0" width="49.6" height="13" fill="#000"/>
<text x="1745.8" y="412.9" fill="#8cc82a">200 mV</text>
<rect x="1724.3" y="425.0" width="22.7" height="13" fill="#000"/>
<text x="1745.8" y="435.9" fill="#8cc82a">0 V</text>
<rect x="1693.0" y="448.0" width="54.0" height="13" fill="#000"/>
<text x="1745.8" y="458.9" fill="#8cc82a">-200 mV</text>
<rect x="1693.0" y="472.0" width="54.0" height="13" fill="#000"/>
<text x="1745.8" y="482.9" fill="#8cc82a">-400 mV</text>
<rect x="1693.0" y="495.0" width="54.0" height="13" fill="#000"/>
<text x="1745.8" y="505.9" fill="#8cc82a">-600 mV</text>
<rect x="1671.5" y="543.0" width="75.5" height="13" fill="#000"/>
<text x="1745.8" y="553.9" fill="#f08c1e">579.964 mT</text>
<rect x="1671.5" y="566.0" width="75.5" height="13" fill="#000"/>
<text x="1745.8" y="576.9" fill="#f08c1e">507.469 mT</text>
<rect x="1671.5" y="590.0" width="75.5" height="13" fill="#000"/>
<text x="1745.8" y="600.9" fill="#f08c1e">434.973 mT</text>
<rect x="1671.5" y="613.0" width="75.5" height="13" fill="#000"/>
<text x="1745.8" y="623.9" fill="#f08c1e">362.478 mT</text>
<rect x="1671.5" y="636.0" width="75.5" height="13" fill="#000"/>
<text x="1745.8" y="646.9" fill="#f08c1e">289.982 mT</text>
<rect x="1671.5" y="659.0" width="75.5" height="13" fill="#000"/>
<text x="1745.8" y="669.9" fill="#f08c1e">217.487 mT</text>
<rect x="1671.5" y="682.0" width="75.5" height="13" fill="#000"/>
<text x="1745.8" y="692.9" fill="#f08c1e">144.991 mT</text>
<rect x="1679.2" y="706.0" width="67.8" height="13" fill="#000"/>
<text x="1745.8" y="716.9" fill="#f08c1e">72.496 mT</text>
<rect x="1725.2" y="729.0" width="21.8" height="13" fill="#000"/>
<text x="1745.8" y="739.9" fill="#f08c1e">0 T</text>
<rect x="1690.7" y="765.0" width="56.3" height="13" fill="#000"/>
<text x="1745.8" y="775.9" fill="#8a38a0">8.564 kA</text>
<rect x="1690.7" y="788.0" width="56.3" height="13" fill="#000"/>
<text x="1745.8" y="798.9" fill="#8a38a0">7.494 kA</text>
<rect x="1690.7" y="812.0" width="56.3" height="13" fill="#000"/>
<text x="1745.8" y="822.9" fill="#8a38a0">6.423 kA</text>
<rect x="1690.7" y="835.0" width="56.3" height="13" fill="#000"/>
<text x="1745.8" y="845.9" fill="#8a38a0">5.353 kA</text>
<rect x="1690.7" y="858.0" width="56.3" height="13" fill="#000"/>
<text x="1745.8" y="868.9" fill="#8a38a0">4.282 kA</text>
<rect x="1690.7" y="882.0" width="56.3" height="13" fill="#000"/>
<text x="1745.8" y="892.9" fill="#8a38a0">3.212 kA</text>
<rect x="1690.7" y="905.0" width="56.3" height="13" fill="#000"/>
<text x="1745.8" y="915.9" fill="#8a38a0">2.141 kA</text>
<rect x="1690.7" y="928.0" width="56.3" height="13" fill="#000"/>
<text x="1745.8" y="938.9" fill="#8a38a0">1.071 kA</text>
<rect x="1724.3" y="952.0" width="22.7" height="13" fill="#000"/>
<text x="1745.8" y="962.9" fill="#8a38a0">0 A</text>
<rect x="1686.3" y="975.0" width="60.7" height="13" fill="#000"/>
<text x="1745.8" y="985.9" fill="#8a38a0">-1.071 kA</text>
</g>
<rect x="45.0" y="975" width="19.7" height="18" fill="#000"/>
<text x="54.9" y="987" text-anchor="middle" fill="#b4b4b4" font-size="12">0 s</text>
<rect x="214.1" y="975" width="31.4" height="18" fill="#000"/>
<text x="229.8" y="987" text-anchor="middle" fill="#b4b4b4" font-size="12">4 ms</text>
<rect x="389.0" y="975" width="31.4" height="18" fill="#000"/>
<text x="404.7" y="987" text-anchor="middle" fill="#b4b4b4" font-size="12">8 ms</text>
<rect x="560.1" y="975" width="39.0" height="18" fill="#000"/>
<text x="579.6" y="987" text-anchor="middle" fill="#b4b4b4" font-size="12">12 ms</text>
<rect x="735.0" y="975" width="39.0" height="18" fill="#000"/>
<text x="754.5" y="987" text-anchor="middle" fill="#b4b4b4" font-size="12">16 ms</text>
<rect x="909.9" y="975" width="39.0" height="18" fill="#000"/>
<text x="929.4" y="987" text-anchor="middle" fill="#b4b4b4" font-size="12">20 ms</text>
<rect x="1084.8" y="975" width="39.0" height="18" fill="#000"/>
<text x="1104.3" y="987" text-anchor="middle" fill="#b4b4b4" font-size="12">24 ms</text>
<rect x="1259.7" y="975" width="39.0" height="18" fill="#000"/>
<text x="1279.2" y="987" text-anchor="middle" fill="#b4b4b4" font-size="12">28 ms</text>
<rect x="1434.6" y="975" width="39.0" height="18" fill="#000"/>
<text x="1454.1" y="987" text-anchor="middle" fill="#b4b4b4" font-size="12">32 ms</text>
<rect x="1609.5" y="975" width="39.0" height="18" fill="#000"/>
<text x="1629.0" y="987" text-anchor="middle" fill="#b4b4b4" font-size="12">36 ms</text>
<g fill="none" stroke-width="1" shape-rendering="crispEdges">
<path d="M3 958.5h149M152.5 958v2M153.5 958v2M154 958.5h1M155.5 958v2M156.5 958v2M157.5 958v2M158.5 958v2M159.5 958v2M160.5 958v2M161 959.5h2M163.5 958v2M164.5 958v2M165.5 958v2M166 959.5h1M167.5 958v2M168 959.5h54M222.5 959v2M223.5 959v2M224.5 959v2M225.5 959v2M226.5 959v2M227.5 959v2M228.5 959v2M229.5 959v2M230.5 959v2M231.5 959v2M232.5 959v2M233.5 959v2M234.5 959v2M235.5 959v2M236 960.5h1M237.5 959v2M238 960.5h53M291.5 960v2M292 960.5h2M294.5 960v2M295 960.5h2M297.5 960v2M298.5 960v2M299.5 960v2M300.5 960v2M301.5 960v2M302.5 960v2M303.5 960v2M304.5 960v2M305.5 960v2M306 961.5h1M307.5 960v2M308 961.5h3M311.5 960v2M312 961.5h8M320.5 958v4M321.5 961v6M322 962.5h3M325.5 962v2M326.5 962v2M327 963.5h1M328.5 962v2M329.5 962v2M330.5 962v2M331 962.5h37M368.5 961v2M369 962.5h2M371.5 961v2M372.5 961v2M373.5 961v2M374.5 961v2M375.5 961v2M376 962.5h8M384.5 962v2M385.5 962v2M386.5 962v2M387 963.5h1M388.5 962v2M389.5 962v2M390.5 962v2M391.5 962v2M392.5 962v2M393.5 962v2M394.5 962v2M395.5 962v2M396.5 962v2M397.5 962v2M398.5 962v2M399.5 962v2M400.5 962v2M401 962.5h1M402.5 962v2M403.5 962v2M404.5 962v2M405 963.5h1M406.5 962v2M407.5 962v2M408.5 962v2M409.5 962v2M410.5 962v2M411 963.5h1M412.5 962v2M413.5 962v2M414.5 962v2M415.5 962v2M416.5 962v2M417.5 962v2M418.5 962v2M419.5 962v2M420.5 962v2M421 963.5h1M422.5 962v2M423.5 962v2M424.5 962v2M425.5 962v2M426.5 962v2M427.5 962v2M428.5 962v2M429.5 962v2M430.5 962v2M431 963.5h1M432.5 962v2M433.5 962v2M434 963.5h4M438.5 962v2M439.5 962v2M440.5 962v2M441 963.5h1M442.5 962v2M443 963.5h1M444.5 962v2M445.5 962v2M446.5 962v2M447 963.5h32M479.5 962v2M480.5 962v2M481.5 961v3M482.5 961v2M483.5 960v2M484.5 958v3M485.5 957v2M486.5 956v2M487.5 955v2M488.5 955v2M489.5 954v2M490.5 954v2M491.5 953v2M492 953.5h1M493.5 952v2M494.5 952v2M495 952.5h1M496.5 951v2M497.5 950v2M498.5 950v2M499.5 949v2M500.5 949v2M501 949.5h1M502.5 948v2M503.5 948v2M504.5 947v2M505.5 947v2M506 947.5h1M507.5 946v2M508.5 946v2M509.5 946v2M510.5 945v3M511.5 945v2M512.5 945v2M513.5 944v2M514.5 944v2M515.5 944v2M516 944.5h1M517.5 943v2M518.5 943v2M519 943.5h1M520.5 942v2M521.5 942v2M522.5 941v3M523.5 941v2M524.5 941v2M525.5 941v2M526.5 940v2M527.5 940v2M528.5 940v2M529.5 939v2M530.5 939v2M531.5 939v2M532.5 938v2M533.5 938v2M534.5 938v2M535.5 938v2M536 938.5h1M537.5 937v2M538.5 937v2M539.5 936v2M540.5 936v2M541 936.5h1M542.5 935v2M543.5 935v2M544.5 935v2M545 935.5h1M546.5 934v2M547.5 934v2M548 934.5h1M549.5 933v2M550.5 933v2M551.5 932v3M552.5 932v2M553.5 932v2M554.5 932v2M555.5 932v2M556 932.5h1M557.5 931v2M558.5 931v2M559 931.5h1M560.5 930v2M561.5 930v2M562 930.5h1M563.5 929v2M564.5 929v2M565.5 929v2M566.5 929v2M567 929.5h1M568.5 928v2M569.5 928v2M570.5 927v2M571.5 927v2M572.5 927v2M573.5 927v2M574 927.5h1M575.5 926v2M576.5 926v2M577 926.5h1M578.5 925v2M579.5 925v2M580 925.5h1M581.5 924v2M582.5 924v2M583 924.5h1M584.5 923v2M585.5 923v2M586.5 923v2M587.5 922v2M588.5 922v2M589 922.5h1M590.5 921v2M591.5 921v2M592 921.5h1M593.5 920v2M594.5 920v2M595.5 920v2M596.5 919v2M597.5 919v2M598 919.5h1M599.5 918v2M600.5 918v2M601.5 918v2M602.5 917v2M603.5 917v2M604.5 917v2M605.5 916v2M606.5 916v2M607.5 916v2M608.5 916v2M609.5 915v2M610.5 915v2M611.5 915v2M612.5 914v2M613.5 914v2M614 914.5h1M615.5 913v2M616.5 913v2M617 913.5h2M619.5 912v2M620.5 911v2M621.5 911v2M622 911.5h2M624.5 910v2M625.5 910v2M626.5 910v2M627 910.5h1M628.5 909v2M629.5 909v2M630.5 909v2M631.5 908v2M632.5 908v2M633.5 908v2M634.5 907v2M635.5 907v2M636.5 907v2M637.5 907v2M638.5 906v2M639.5 906v2M640.5 906v2M641 906.5h1M642.5 905v2M643.5 905v2M644.5 904v3M645.5 904v2M646.5 904v2M647.5 904v2M648 904.5h1M649.5 903v2M650.5 903v2M651 903.5h1M652.5 902v2M653.5 902v2M654.5 902v2M655 902.5h1M656.5 901v2M657.5 901v2M658.5 900v2M659.5 900v2M660.5 900v2M661.5 900v2M662.5 899v2M663.5 899v2M664 900.5h1M665.5 899v2M666 899.5h1M667.5 898v2M668.5 898v2M669 898.5h1M670.5 897v2M671.5 897v2M672 897.5h1M673.5 896v2M674.5 896v2M675.5 896v2M676.5 895v2M677.5 895v2M678.5 894v3M679.5 894v2M680.5 894v2M681 894.5h1M682.5 893v2M683.5 893v2M684.5 893v2M685.5 892v2M686.5 892v2M687.5 892v2M688.5 891v2M689 891.5h1M690.5 891v2M691.5 890v2M692.5 890v2M693.5 890v2M694.5 889v2M695 890.5h1M696.5 889v2M697.5 889v2M698 889.5h1M699.5 888v2M700.5 888v2M701.5 888v2M702.5 887v2M703.5 887v2M704.5 886v2M705.5 886v2M706.5 886v2M707.5 885v2M708.5 885v2M709.5 885v2M710 885.5h1M711.5 884v2M712.5 884v2M713 884.5h1M714.5 883v2M715.5 883v2M716.5 883v2M717.5 882v2M718.5 882v2M719.5 882v2M720 882.5h2M722.5 881v2M723.5 881v2M724.5 881v2M725.5 881v2M726.5 880v2M727.5 880v2M728.5 880v2M729.5 880v2M730.5 880v2M731.5 879v2M732.5 879v2M733 880.5h1M734.5 879v2M735.5 879v2M736.5 879v2M737.5 878v2M738.5 878v2M739.5 878v2M740.5 878v2M741.5 878v2M742.5 878v2M743.5 877v2M744.5 877v2M745.5 877v2M746.5 877v2M747 877.5h2M749.5 876v2M750.5 876v2M751.5 876v2M752.5 876v2M753.5 876v2M754.5 875v2M755.5 875v2M756.5 875v2M757.5 875v2M758.5 875v2M759.5 874v2M760.5 874v2M761.5 874v2M762.5 873v3M763.5 873v2M764.5 873v2M765.5 873v2M766.5 872v3M767.5 872v2M768.5 872v2M769.5 872v2M770.5 871v2M771.5 871v2M772.5 871v2M773.5 871v2M774.5 871v2M775.5 870v2M776.5 870v2M777.5 870v2M778.5 870v2M779.5 869v2M780.5 869v2M781.5 869v2M782.5 869v2M783.5 868v2M784.5 868v2M785.5 868v2M786 868.5h1M787.5 868v2M788.5 867v2M789.5 867v2M790.5 867v2M791 867.5h1M792.5 866v2M793 866.5h1M794.5 866v2M795 866.5h1M796.5 865v2M797.5 865v2M798.5 865v2M799.5 865v2M800.5 864v2M801.5 864v2M802 865.5h1M803.5 864v2M804.5 864v2M805.5 863v3M806.5 863v2M807 864.5h1M808.5 863v2M809.5 863v2M810 863.5h1M811.5 862v2M812.5 862v2M813.5 862v2M814 862.5h1M815.5 861v2M816.5 861v2M817.5 861v2M818.5 861v2M819 861.5h1M820.5 860v2M821.5 860v2M822.5 860v2M823.5 860v2M824 860.5h1M825.5 859v2M826.5 859v2M827.5 859v2M828 859.5h1M829.5 858v2M830.5 858v2M831.5 858v2M832.5 858v2M833.5 858v2M834.5 857v2M835 858.5h1M836.5 857v2M837.5 857v2M838 857.5h2M840.5 856v2M841.5 856v2M842.5 856v2M843.5 855v2M844.5 855v2M845.5 855v2M846.5 855v2M847.5 855v2M848.5 855v2M849.5 854v2M850.5 854v2M851.5 854v2M852.5 854v2M853 854.5h1M854.5 853v2M855.5 853v2M856.5 853v2M857.5 853v2M858 853.5h1M859.5 852v2M860.5 852v2M861 852.5h1M862.5 852v2M863.5 851v3M864.5 851v2M865.5 851v2M866.5 851v2M867.5 850v2M868.5 850v2M869.5 850v2M870.5 850v2M871.5 850v2M872 850.5h1M873.5 849v2M874.5 849v2M875 849.5h3M878.5 848v2M879.5 848v2M880.5 848v2M881.5 848v2M882.5 847v3M883.5 847v2M884.5 847v2M885.5 847v2M886.5 847v2M887.5 847v2M888 847.5h2M890.5 846v2M891.5 846v2M892.5 846v2M893.5 846v2M894.5 846v2M895.5 846v2M896 846.5h1M897.5 845v2M898.5 845v2M899.5 844v3M900.5 844v3M901.5 845v2M902.5 845v2M903.5 844v3M904.5 844v3M905.5 844v3M906.5 844v3M907.5 844v3M908.5 845v2M909 845.5h1M910.5 844v3M911.5 844v2M912.5 844v3M913.5 844v3M914.5 844v2M915 844.5h1M916.5 844v2M917.5 843v3M918.5 843v3M919.5 843v2M920.5 843v2M921.5 842v3M922.5 842v3M923.5 842v2M924.5 842v2M925.5 842v2M926.5 833v12M927.5 843v2M928.5 843v2M929.5 843v2M930.5 843v2M931.5 842v2M932.5 842v2M933.5 842v2M934.5 842v2M935.5 842v2M936.5 841v3M937.5 841v3M938.5 841v2M939.5 841v2M940.5 841v2M941.5 840v3M942.5 840v3M943 840.5h1M944.5 839v3M945.5 839v3M946.5 839v3M947.5 839v2M948.5 839v2M949.5 838v3M950.5 838v2M951 839.5h1M952.5 838v2M953.5 838v2M954.5 838v2M955.5 837v2M956.5 837v3M957.5 837v3M958.5 837v2M959.5 837v2M960.5 837v2M961.5 836v3M962.5 836v3M963.5 836v3M964.5 836v2M965.5 836v2M966.5 835v3M967.5 835v2M968.5 835v3M969.5 835v2M970.5 834v3M971.5 834v2M972.5 834v3M973.5 824v14M974.5 836v3M975.5 838v2M976.5 838v2M977.5 838v2M978.5 838v2M979 839.5h1M980.5 838v2M981.5 838v2M982.5 838v3M983.5 838v3M984.5 838v3M985.5 838v2M986.5 838v2M987.5 838v2M988.5 837v2M989.5 836v3M990.5 836v2M991.5 836v2M992.5 835v2M993.5 835v2M994.5 834v3M995.5 834v3M996.5 834v2M997.5 834v2M998.5 834v2M999.5 832v3M1000.5 832v3M1001.5 832v2M1002.5 831v3M1003.5 831v3M1004.5 831v2M1005.5 830v3M1006.5 830v2M1007.5 830v2M1008.5 829v3M1009.5 829v2M1010.5 829v2M1011.5 829v2M1012.5 829v2M1013.5 829v3M1014.5 829v3M1015.5 830v2M1016.5 830v2M1017.5 830v2M1018 830.5h1M1019.5 830v2M1020.5 830v2M1021.5 830v2M1022.5 829v3M1023.5 829v2M1024.5 829v2M1025.5 828v3M1026.5 827v3M1027.5 827v2M1028.5 827v2M1029.5 826v3M1030.5 826v3M1031.5 826v2M1032 826.5h1M1033.5 825v2M1034.5 825v2M1035.5 824v3M1036.5 824v3M1037.5 824v2M1038.5 824v2M1039.5 824v2M1040.5 824v2M1041.5 823v3M1042.5 824v2M1043.5 823v3M1044.5 823v2M1045.5 823v2M1046.5 823v2M1047.5 823v2M1048.5 823v2M1049.5 823v2M1050.5 823v2M1051.5 822v2M1052.5 822v2M1053.5 822v3M1054.5 822v2M1055.5 822v2M1056.5 821v3M1057.5 821v2M1058.5 822v2M1059.5 821v2M1060 821.5h2M1062.5 820v3M1063.5 820v2M1064.5 820v2M1065.5 820v2M1066.5 819v3M1067.5 819v2M1068.5 819v2M1069.5 819v2M1070.5 818v3M1071.5 819v2M1072.5 818v2M1073.5 818v2M1074.5 817v3M1075.5 818v2M1076.5 818v2M1077.5 818v2M1078.5 818v2M1079.5 818v2M1080.5 818v2M1081.5 818v2M1082.5 818v2M1083.5 818v2M1084.5 818v3M1085.5 818v3M1086.5 818v3M1087.5 818v2M1088.5 818v2M1089.5 817v3M1090.5 817v2M1091.5 817v3M1092.5 818v2M1093 818.5h1M1094.5 817v2M1095.5 817v2M1096.5 815v3M1097 815.5h1M1098.5 813v3M1099.5 812v3M1100 813.5h1M1101.5 812v3M1102.5 813v2M1103.5 813v3M1104.5 814v2M1105.5 814v2M1106.5 814v2M1107.5 813v2M1108.5 813v2M1109.5 813v2M1110.5 813v2M1111.5 813v2M1112.5 812v2M1113.5 813v2M1114.5 798v18M1115.5 815v2M1116.5 816v3M1117.5 816v3M1118.5 817v2M1119.5 817v2M1120.5 817v2M1121.5 816v3M1122.5 816v2M1123.5 816v2M1124.5 816v2M1125.5 816v2M1126.5 815v3M1127.5 815v2M1128.5 815v2M1129 815.5h1M1130.5 815v2M1131.5 815v2M1132.5 814v3M1133.5 814v2M1134.5 814v2M1135.5 813v3M1136.5 813v2M1137.5 813v2M1138.5 813v2M1139.5 813v2M1140.5 812v3M1141.5 812v2M1142.5 811v3M1143.5 811v3M1144.5 811v2M1145 811.5h1M1146.5 811v2M1147.5 810v3M1148.5 810v2M1149.5 810v2M1150.5 809v2M1151 809.5h1M1152.5 809v2M1153.5 809v2M1154.5 809v2M1155.5 808v3M1156.5 808v2M1157.5 808v2M1158.5 807v3M1159.5 807v3M1160.5 806v3M1161.5 806v3M1162.5 806v2M1163.5 807v2M1164.5 807v2M1165.5 807v2M1166.5 807v2M1167.5 807v2M1168.5 807v2M1169.5 807v3M1170.5 808v2M1171.5 807v3M1172.5 808v2M1173.5 808v2M1174.5 808v2M1175.5 808v2M1176.5 808v2M1177.5 807v3M1178.5 808v2M1179.5 807v2M1180.5 807v2M1181.5 806v3M1182.5 806v3M1183.5 806v2M1184.5 806v2M1185.5 806v2M1186.5 805v3M1187.5 805v2M1188.5 805v2M1189.5 804v2M1190.5 804v3M1191.5 804v3M1192.5 804v3M1193.5 804v3M1194 805.5h1M1195.5 804v2M1196.5 804v2M1197.5 804v2M1198.5 804v2M1199.5 804v2M1200 805.5h1M1201.5 804v2M1202.5 804v2M1203.5 804v2M1204 804.5h1M1205.5 804v2M1206.5 804v2M1207.5 803v3M1208.5 804v2M1209.5 803v3M1210.5 803v3M1211.5 803v2M1212.5 803v3M1213.5 803v2M1214.5 803v2M1215.5 803v2M1216.5 802v3M1217.5 802v3M1218.5 802v2M1219.5 802v2M1220.5 802v2M1221.5 802v2M1222.5 802v3M1223.5 802v2M1224.5 802v2M1225.5 802v2M1226.5 802v2M1227.5 802v2M1228.5 802v2M1229.5 802v2M1230.5 801v3M1231 802.5h1M1232.5 801v2M1233.5 802v2M1234.5 801v2M1235.5 801v2M1236.5 801v2M1237.5 801v2M1238.5 801v2M1239.5 801v2M1240.5 801v2M1241.5 801v2M1242.5 801v2M1243.5 801v2M1244.5 801v2M1245.5 801v2M1246.5 801v2M1247.5 801v2M1248.5 801v2M1249.5 801v2M1250.5 800v3M1251.5 800v3M1252.5 800v3M1253.5 800v2M1254.5 799v3M1255.5 799v3M1256.5 799v2M1257.5 799v2M1258.5 799v2M1259.5 799v2M1260.5 798v3M1261.5 798v3M1262.5 798v3M1263.5 798v3M1264.5 799v2M1265.5 799v2M1266.5 799v2M1267.5 799v2M1268.5 799v2M1269.5 799v2M1270.5 799v2M1271.5 799v2M1272 800.5h1M1273.5 800v2M1274.5 799v2M1275.5 799v3M1276.5 799v3M1277.5 799v2M1278.5 798v2M1279.5 798v2M1280.5 798v2M1281.5 797v3M1282.5 798v2M1283.5 798v2M1284 799.5h1M1285.5 799v2M1286.5 799v2M1287.5 799v3M1288.5 800v2M1289.5 800v2M1290.5 800v2M1291 800.5h1M1292.5 800v2M1293.5 799v2M1294.5 799v3M1295.5 800v2M1296.5 800v2M1297.5 800v2M1298.5 799v2M1299.5 799v3M1300.5 783v21M1301.5 802v4M1302.5 805v2M1303.5 806v4M1304.5 809v3M1305.5 810v2M1306.5 811v4M1307.5 814v4M1308.5 816v4M1309.5 819v4M1310.5 822v4M1311.5 824v2M1312.5 822v3M1313.5 821v3M1314.5 819v3M1315.5 819v2M1316.5 819v2M1317.5 818v2M1318.5 818v2M1319.5 818v2M1320.5 818v2M1321.5 818v2M1322.5 818v2M1323.5 798v22M1324.5 818v6M1325.5 823v7M1326.5 829v5M1327.5 833v2M1328.5 833v2M1329.5 832v2M1330.5 831v3M1331.5 832v2M1332.5 832v4M1333.5 823v15M1334.5 837v4M1335.5 840v3M1336.5 842v4M1337.5 845v2M1338.5 839v13M1339.5 851v3M1340.5 853v7M1341.5 859v8M1342.5 866v9M1343.5 874v9M1344.5 882v9M1345.5 890v9M1346.5 898v7M1347.5 904v6M1348.5 909v6M1349.5 914v7M1350.5 920v5M1351.5 924v6M1352.5 929v6M1353.5 934v5M1354.5 938v4M1355.5 941v5M1356.5 945v4M1357.5 948v3M1358.5 950v3M1359.5 952v3M1360.5 954v2M1361.5 955v3M1362.5 957v3M1363 959.5h1M1364.5 959v2M1365 960.5h1M1366.5 960v2M1367.5 961v2M1368 962.5h1M1369.5 962v2M1370.5 963v2M1371 964.5h3M1374.5 964v2M1375.5 964v2M1376 965.5h3M1379.5 965v2M1380 966.5h21M1401.5 965v2M1402 965.5h7M1409.5 965v2M1410.5 965v2M1411.5 965v2M1412 966.5h2M1414.5 965v2M1415 966.5h22M1437.5 966v2M1438.5 966v2M1439.5 966v2M1440 967.5h1M1441.5 966v2M1442.5 966v2M1443 967.5h206M1649.5 967v2M1650.5 968v2M1651.5 968v2M1652.5 968v2M1653 968.5h48M1701.5 968v2M1702.5 968v2M1703 968.5h5M1708.5 968v2M1709.5 968v2M1710 968.5h2M1712.5 968v2M1713.5 968v2M1714.5 968v2M1715.5 968v2M1716.5 968v2M1717.5 968v2M1718.5 968v2M1719 968.5h1M1720.5 968v2M1721.5 968v2M1722.5 968v2M1723.5 968v2M1724.5 968v2M1725.5 968v2M1726.5 968v2M1727.5 968v2M1728 968.5h1M1729.5 968v2M1730.5 968v2M1731.5 968v2M1732.5 968v2M1733.5 968v2M1734.5 968v2M1735.5 968v2M1736.5 968v2M1737.5 968v2M1738.5 968v2M1739 969.5h1M1740.5 968v2M1741.5 968v2M1742.5 968v2M1743.5 968v2M1744.5 968v2M1745.5 968v2M1746 968.5h5" stroke="#712d8b"/>
<path d="M3 734.5h56M59.5 733v2M60 733.5h1M61.5 732v2M62 732.5h3M65.5 731v2M66 731.5h2M68.5 730v2M69 730.5h3M72.5 729v2M73 729.5h2M75.5 728v2M76 728.5h3M79.5 727v2M80 727.5h2M82.5 726v2M83 726.5h3M86.5 725v2M87 725.5h2M89.5 724v2M90 724.5h3M93.5 723v2M94 723.5h3M97.5 722v2M98 722.5h2M100.5 721v2M101 721.5h3M104.5 720v2M105 720.5h3M108.5 719v2M109 719.5h2M111.5 718v2M112 718.5h3M115.5 717v2M116 717.5h3M119.5 716v2M120 716.5h3M123.5 715v2M124 715.5h2M126.5 714v2M127 714.5h3M130.5 713v2M131 713.5h3M134.5 712v2M135 712.5h3M138.5 711v2M139 711.5h3M142.5 710v2M143 710.5h3M146.5 709v2M147 709.5h3M150.5 708v2M151 708.5h2M153.5 707v2M154 707.5h3M157.5 706v2M158 706.5h3M161.5 705v2M162 705.5h3M165.5 704v2M166 704.5h3M169.5 703v2M170 703.5h3M173.5 702v2M174 702.5h3M177.5 701v2M178 701.5h3M181.5 700v2M182 700.5h3M185.5 699v2M186 699.5h3M189.5 698v2M190 698.5h3M193.5 697v2M194 697.5h3M197.5 696v2M198 696.5h4M202.5 695v2M203 695.5h3M206.5 694v2M207 694.5h3M210.5 693v2M211 693.5h3M214.5 692v2M215 692.5h3M218.5 691v2M219 691.5h3M222.5 690v2M223 690.5h3M226.5 689v2M227 689.5h3M230.5 688v2M231 688.5h3M234.5 687v2M235 687.5h4M239.5 686v2M240 686.5h3M243.5 685v2M244 685.5h3M247.5 684v2M248 684.5h3M251.5 683v2M252 683.5h4M256.5 682v2M257 682.5h3M260.5 681v2M261 681.5h3M264.5 680v2M265 680.5h4M269.5 679v2M270 679.5h3M273.5 678v2M274 678.5h4M278.5 677v2M279 677.5h3M282.5 676v2M283 676.5h3M286.5 675v2M287 675.5h4M291.5 674v2M292 674.5h3M295.5 673v2M296 673.5h4M300.5 672v2M301 672.5h3M304.5 671v2M305 671.5h4M309.5 670v2M310 670.5h3M313.5 669v2M314 669.5h4M318.5 668v2M319 668.5h3M322.5 667v2M323 667.5h4M327.5 666v2M328 666.5h3M331.5 665v2M332 665.5h4M336.5 664v2M337 664.5h3M340.5 663v2M341 663.5h4M345.5 662v2M346 662.5h3M349.5 661v2M350 661.5h4M354.5 660v2M355 660.5h3M358.5 659v2M359 659.5h4M363.5 658v2M364 658.5h3M367.5 657v2M368 657.5h4M372.5 656v2M373 656.5h4M377.5 655v2M378 655.5h3M381.5 654v2M382 654.5h4M386.5 653v2M387 653.5h4M391.5 652v2M392 652.5h3M395.5 651v2M396 651.5h4M400.5 650v2M401 650.5h4M405.5 649v2M406 649.5h4M410.5 648v2M411 648.5h4M415.5 647v2M416 647.5h4M420.5 646v2M421 646.5h4M425.5 645v2M426 645.5h4M430.5 644v2M431 644.5h4M435.5 643v2M436 643.5h4M440.5 642v2M441 642.5h4M445.5 641v2M446 641.5h4M450.5 640v2M451 640.5h5M456.5 639v2M457 639.5h4M461.5 638v2M462 638.5h4M466.5 637v2M467 637.5h4M471.5 636v2M472 636.5h4M476.5 635v2M477 635.5h5M482.5 634v2M483 634.5h4M487.5 633v2M488 633.5h4M492.5 632v2M493 632.5h5M498.5 631v2M499 631.5h4M503.5 630v2M504 630.5h5M509.5 629v2M510 629.5h4M514.5 628v2M515 628.5h5M520.5 627v2M521 627.5h4M525.5 626v2M526 626.5h5M531.5 625v2M532 625.5h5M537.5 624v2M538 624.5h4M542.5 623v2M543 623.5h5M548.5 622v2M549 622.5h5M554.5 621v2M555 621.5h4M559.5 620v2M560 620.5h5M565.5 619v2M566 619.5h5M571.5 618v2M572 618.5h5M577.5 617v2M578 617.5h5M583.5 616v2M584 616.5h5M589.5 615v2M590 615.5h5M595.5 614v2M596 614.5h5M601.5 613v2M602 613.5h5M607.5 612v2M608 612.5h5M613.5 611v2M614 611.5h5M619.5 610v2M620 610.5h6M626.5 609v2M627 609.5h5M632.5 608v2M633 608.5h5M638.5 607v2M639 607.5h6M645.5 606v2M646 606.5h5M651.5 605v2M652 605.5h5M657.5 604v2M658 604.5h6M664.5 603v2M665 603.5h5M670.5 602v2M671 602.5h6M677.5 601v2M678 601.5h5M683.5 600v2M684 600.5h6M690.5 599v2M691 599.5h6M697.5 598v2M698 598.5h6M704.5 597v2M705 597.5h5M710.5 596v2M711 596.5h6M717.5 595v2M718 595.5h6M724.5 594v2M725 594.5h6M731.5 593v2M732 593.5h6M738.5 592v2M739 592.5h7M746.5 591v2M747 591.5h6M753.5 590v2M754 590.5h6M760.5 589v2M761 589.5h7M768.5 588v2M769 588.5h7M776.5 587v2M777 587.5h6M783.5 586v2M784 586.5h7M791.5 585v2M792 585.5h8M800.5 584v2M801 584.5h7M808.5 583v2M809 583.5h7M816.5 582v2M817 582.5h6M823.5 581v2M824 581.5h7M831.5 580v2M832 580.5h6M838.5 579v2M839 579.5h7M846.5 578v2M847 578.5h7M854.5 577v2M855 577.5h8M863.5 576v2M864 576.5h9M873.5 575v2M874 575.5h9M883.5 574v2M884 574.5h9M893.5 573v2M894 573.5h10M904.5 572v2M905 572.5h11M916.5 571v2M917 571.5h10M927.5 570v2M928 570.5h11M939.5 569v2M940 569.5h11M951.5 568v2M952 568.5h11M963.5 567v2M964 567.5h11M975.5 566v2M976 566.5h12M988.5 565v2M989 565.5h11M1000.5 564v2M1001 564.5h12M1013.5 563v2M1014 563.5h12M1026.5 562v2M1027 562.5h13M1040.5 561v2M1041 561.5h13M1054.5 560v2M1055 560.5h15M1070.5 559v2M1071 559.5h16M1087.5 558v2M1088 558.5h17M1105.5 557v2M1106 557.5h20M1126.5 556v2M1127 556.5h21M1148.5 555v2M1149 555.5h23M1172.5 554v2M1173 554.5h25M1198.5 553v2M1199 553.5h27M1226.5 552v2M1227 552.5h30M1257.5 551v2M1258 551.5h31M1289.5 550v2M1290 550.5h34M1324.5 549v2M1325 549.5h122M1447.5 549v2M1448 550.5h47M1495.5 550v2M1496 551.5h37M1533.5 551v2M1534 552.5h29M1563.5 552v2M1564 553.5h25M1589.5 553v2M1590 554.5h24M1614.5 554v2M1615 555.5h20M1635.5 555v2M1636 556.5h21M1657.5 556v2M1658 557.5h17M1675.5 557v2M1676 558.5h18M1694.5 558v2M1695 559.5h17M1712.5 559v2M1713 560.5h15M1728.5 560v2M1729 561.5h15M1744.5 561v2M1745 562.5h6" stroke="#f08c1e"/>
<path d="M3 430.5h482M485.5 429v2M486.5 428v2M487.5 427v2M488 427.5h1M489.5 426v2M490.5 425v2M491.5 424v2M492.5 423v2M493.5 422v2M494 422.5h1M495.5 421v2M496.5 420v2M497.5 419v2M498.5 418v2M499 418.5h1M500.5 416v3M501 416.5h1M502.5 415v2M503.5 414v2M504.5 413v2M505.5 412v2M506.5 411v2M507.5 410v2M508.5 409v2M509.5 408v2M510.5 407v2M511.5 406v2M512.5 405v2M513.5 404v2M514.5 403v2M515.5 402v2M516 402.5h1M517.5 401v2M518.5 400v2M519.5 399v2M520 399.5h1M521.5 398v2M522.5 397v2M523 397.5h1M524.5 396v2M525 396.5h1M526.5 395v2M527 395.5h1M528.5 394v2M529 394.5h1M530.5 393v2M531 393.5h2M533.5 392v2M534 392.5h2M536.5 391v2M537.5 391v2M538 391.5h2M540.5 390v2M541.5 390v2M542 390.5h6M548.5 389v2M549 389.5h16M565.5 389v2M566 389.5h1M567.5 389v2M568.5 389v2M569 390.5h13M582.5 390v2M583.5 390v2M584.5 390v2M585.5 390v2M586 391.5h15M601.5 391v2M602.5 391v2M603 392.5h14M617.5 392v2M618.5 392v2M619.5 392v2M620.5 392v2M621 393.5h26M647.5 393v2M648.5 393v2M649.5 393v2M650.5 393v2M651 394.5h71M722.5 394v2M723 395.5h3M726.5 395v2M727 396.5h63M790.5 396v2M791 397.5h8M799.5 397v2M800.5 397v2M801.5 397v2M802 398.5h24M826.5 398v2M827.5 398v2M828 399.5h10M838.5 399v2M839.5 399v2M840.5 399v2M841 399.5h2M843.5 398v2M844.5 398v2M845 398.5h18M863.5 398v2M864.5 398v2M865.5 398v2M866.5 398v2M867.5 398v2M868 399.5h2M870.5 398v2M871 398.5h2M873.5 397v2M874 397.5h7M881.5 397v2M882 398.5h4M886.5 398v2M887 399.5h1M888.5 398v2M889 398.5h3M892.5 397v2M893 397.5h3M896.5 396v2M897 396.5h1M898.5 396v2M899.5 396v2M900 397.5h3M903.5 397v2M904.5 397v2M905.5 397v2M906 397.5h1M907.5 396v2M908 396.5h3M911.5 395v2M912 395.5h1M913.5 395v2M914 395.5h10M924.5 394v2M925.5 394v2M926.5 393v2M927.5 392v2M928 392.5h1M929.5 391v2M930.5 390v2M931.5 390v2M932 390.5h9M941.5 390v2M942 391.5h3M945.5 391v2M946.5 391v2M947 392.5h14M961.5 392v2M962.5 392v2M963.5 392v2M964.5 392v2M965.5 392v2M966.5 392v2M967.5 392v2M968.5 392v2M969.5 392v2M970.5 392v2M971.5 392v2M972.5 392v2M973.5 392v2M974.5 391v2M975.5 390v2M976.5 389v2M977.5 388v2M978 388.5h3M981.5 387v2M982 387.5h3M985.5 387v2M986.5 387v2M987 388.5h3M990.5 388v2M991.5 388v2M992 389.5h2M994.5 389v2M995 390.5h3M998.5 390v2M999 391.5h1M1000.5 391v2M1001 392.5h5M1006.5 391v2M1007 391.5h15M1022.5 391v2M1023.5 391v2M1024 392.5h2M1026.5 392v2M1027 393.5h20M1047.5 393v2M1048.5 393v2M1049.5 393v2M1050.5 393v2M1051.5 393v2M1052.5 393v2M1053.5 393v2M1054.5 393v2M1055 393.5h12M1067.5 393v2M1068 394.5h6M1074.5 393v2M1075 393.5h9M1084.5 393v2M1085 394.5h4M1089.5 394v2M1090 395.5h3M1093.5 395v2M1094 396.5h3M1097.5 396v2M1098 396.5h4M1102.5 395v2M1103 395.5h10M1113.5 394v2M1114.5 393v2M1115.5 392v2M1116.5 391v2M1117.5 390v2M1118 390.5h2M1120.5 389v2M1121 389.5h8M1129.5 389v2M1130 390.5h4M1134.5 390v2M1135 391.5h3M1138.5 391v2M1139 392.5h21M1160.5 392v2M1161 393.5h1M1162.5 392v2M1163 392.5h3M1166.5 391v2M1167 391.5h4M1171.5 390v2M1172 390.5h4M1176.5 390v2M1177 391.5h3M1180.5 391v2M1181 392.5h8M1189.5 391v2M1190.5 391v2M1191.5 391v2M1192 391.5h68M1260.5 391v2M1261.5 391v2M1262.5 391v2M1263 392.5h11M1274.5 392v2M1275.5 392v2M1276 392.5h10M1286.5 391v2M1287 391.5h7M1294.5 391v2M1295 392.5h6M1301.5 391v2M1302.5 389v3M1303.5 387v3M1304.5 385v3M1305.5 384v2M1306.5 382v3M1307.5 381v2M1308.5 380v2M1309.5 379v2M1310.5 377v3M1311.5 376v2M1312 376.5h1M1313.5 376v2M1314 377.5h2M1316.5 377v2M1317.5 378v2M1318 379.5h1M1319.5 379v2M1320.5 380v2M1321.5 381v2M1322 382.5h1M1323.5 381v2M1324.5 378v4M1325.5 376v3M1326.5 375v2M1327 375.5h3M1330.5 374v2M1331.5 374v2M1332.5 375v2M1333 376.5h1M1334.5 374v3M1335.5 373v2M1336 373.5h2M1338.5 373v2M1339.5 373v2M1340.5 371v3M1341.5 370v2M1342.5 369v2M1343.5 368v2M1344.5 368v2M1345 369.5h3M1348.5 369v2M1349 370.5h1M1350.5 370v2M1351.5 371v2M1352 372.5h1M1353.5 372v2M1354.5 373v2M1355 374.5h1M1356.5 374v2M1357.5 375v2M1358.5 376v3M1359.5 378v2M1360.5 379v3M1361.5 381v2M1362.5 382v2M1363.5 383v3M1364.5 385v2M1365.5 386v3M1366.5 388v2M1367.5 389v2M1368.5 390v2M1369.5 391v2M1370.5 392v2M1371.5 393v3M1372.5 395v2M1373.5 396v2M1374.5 397v2M1375.5 398v2M1376.5 399v3M1377.5 401v2M1378.5 402v2M1379 403.5h1M1380.5 403v2M1381.5 404v2M1382.5 405v2M1383.5 406v2M1384.5 407v2M1385.5 408v2M1386.5 409v2M1387 410.5h1M1388.5 410v2M1389.5 411v2M1390 412.5h1M1391.5 412v2M1392 413.5h1M1393.5 413v2M1394 414.5h1M1395.5 414v2M1396.5 415v2M1397.5 415v2M1398 416.5h1M1399.5 416v2M1400.5 417v2M1401 418.5h2M1403.5 418v2M1404 419.5h2M1406.5 419v2M1407 420.5h2M1409.5 420v2M1410 421.5h2M1412.5 421v2M1413 422.5h2M1415.5 422v2M1416 423.5h4M1420.5 423v2M1421 424.5h5M1426.5 424v2M1427 425.5h5M1432.5 425v2M1433.5 425v2M1434 426.5h4M1438.5 426v2M1439.5 426v2M1440 427.5h11M1451.5 427v2M1452 428.5h14M1466.5 428v2M1467.5 428v2M1468.5 428v2M1469.5 428v2M1470.5 428v2M1471 429.5h18M1489.5 429v2M1490 430.5h261" stroke="#8cc82a"/>
<path d="M3.5 265v2M4.5 265v2M5.5 265v2M6.5 265v2M7.5 265v2M8.5 265v2M9.5 265v2M10.5 265v2M11.5 265v2M12.5 265v2M13 265.5h1M14.5 265v2M15.5 265v2M16.5 265v2M17.5 265v2M18.5 265v2M19.5 265v2M20.5 265v2M21.5 265v2M22 265.5h1M23.5 265v2M24.5 265v2M25.5 265v2M26 266.5h1M27.5 265v2M28.5 265v2M29.5 265v2M30.5 265v2M31.5 265v2M32.5 265v2M33.5 265v2M34.5 265v2M35.5 265v2M36.5 265v2M37.5 265v2M38.5 265v2M39.5 265v2M40.5 265v2M41.5 265v2M42.5 265v2M43.5 265v2M44.5 265v2M45.5 265v2M46.5 265v2M47.5 265v2M48.5 265v2M49.5 265v2M50.5 265v2M51.5 265v2M52.5 265v2M53.5 265v2M54.5 265v2M55.5 265v2M56.5 260v13M57 265.5h1M58.5 265v2M59.5 265v2M60.5 265v2M61.5 265v2M62.5 265v2M63.5 265v2M64.5 265v2M65.5 265v2M66.5 265v2M67.5 265v2M68.5 265v2M69.5 265v2M70.5 265v2M71.5 265v2M72.5 265v2M73.5 265v2M74.5 265v2M75.5 265v2M76.5 265v2M77.5 265v2M78.5 265v2M79.5 265v2M80.5 265v2M81 265.5h1M82.5 265v2M83.5 265v2M84.5 265v2M85.5 265v2M86.5 265v2M87.5 265v2M88.5 265v2M89.5 265v2M90.5 265v2M91.5 265v2M92.5 265v2M93.5 265v2M94.5 265v2M95.5 265v2M96.5 265v2M97.5 265v2M98.5 265v2M99.5 265v2M100.5 265v2M101 265.5h1M102.5 265v2M103.5 265v2M104.5 265v2M105.5 265v2M106.5 265v2M107 265.5h1M108.5 265v2M109.5 265v2M110.5 265v2M111.5 265v2M112.5 265v2M113.5 265v2M114.5 265v2M115.5 265v2M116.5 265v2M117.5 265v2M118.5 265v2M119.5 265v2M120.5 265v2M121.5 265v2M122.5 265v2M123.5 265v2M124.5 265v2M125.5 265v2M126.5 265v2M127.5 265v2M128.5 265v2M129.5 265v2M130.5 265v2M131.5 265v2M132 265.5h1M133.5 265v2M134.5 265v2M135.5 265v2M136.5 265v2M137 266.5h1M138.5 265v2M139.5 265v2M140.5 265v2M141.5 265v2M142.5 265v2M143.5 265v2M144.5 265v2M145.5 265v2M146.5 265v2M147.5 265v2M148.5 265v2M149.5 265v2M150.5 265v2M151.5 265v2M152.5 265v2M153.5 265v2M154.5 265v2M155.5 265v2M156.5 265v2M157.5 265v2M158.5 265v2M159.5 265v2M160.5 265v2M161.5 265v2M162.5 265v2M163.5 265v2M164.5 265v2M165.5 265v2M166.5 265v2M167.5 265v2M168.5 265v2M169.5 265v2M170.5 265v2M171.5 265v2M172.5 265v2M173.5 265v2M174.5 265v2M175.5 265v2M176.5 265v2M177.5 265v2M178.5 265v2M179.5 265v2M180.5 265v2M181.5 265v2M182.5 265v2M183.5 265v2M184.5 265v2M185.5 265v2M186.5 265v2M187.5 265v2M188.5 265v2M189.5 265v2M190.5 265v2M191.5 265v2M192.5 265v2M193.5 265v2M194.5 265v2M195.5 265v2M196 266.5h1M197.5 265v2M198.5 265v2M199.5 265v2M200.5 265v2M201.5 265v2M202.5 265v2M203.5 265v2M204.5 265v2M205.5 265v2M206.5 265v2M207.5 265v2M208.5 265v2M209.5 265v2M210.5 265v2M211.5 265v2M212.5 265v2M213 266.5h1M214.5 265v2M215.5 265v2M216.5 265v2M217.5 265v2M218.5 265v2M219.5 265v2M220.5 265v2M221.5 265v2M222.5 265v2M223.5 265v2M224.5 265v2M225.5 265v2M226.5 265v2M227.5 265v2M228.5 265v2M229 266.5h1M230.5 265v2M231.5 265v2M232.5 265v2M233.5 265v2M234.5 265v2M235.5 265v2M236.5 265v2M237.5 265v2M238.5 265v2M239.5 265v2M240.5 265v2M241.5 265v2M242.5 265v2M243.5 265v2M244.5 265v2M245.5 265v2M246.5 265v2M247.5 265v2M248.5 265v2M249.5 265v2M250 266.5h1M251.5 265v2M252.5 265v2M253.5 265v2M254.5 265v2M255.5 265v2M256.5 265v2M257.5 265v2M258.5 265v2M259.5 265v2M260.5 265v2M261.5 265v2M262.5 265v2M263.5 265v2M264.5 265v2M265.5 265v2M266.5 265v2M267.5 265v2M268.5 265v2M269.5 265v2M270.5 265v2M271.5 265v2M272.5 265v2M273.5 265v2M274.5 265v2M275.5 265v2M276.5 265v2M277.5 265v2M278.5 265v2M279.5 265v2M280.5 265v2M281.5 265v2M282.5 265v2M283.5 265v2M284 266.5h1M285.5 265v2M286 266.5h1M287.5 265v2M288.5 265v2M289.5 265v2M290.5 265v2M291.5 265v2M292.5 265v2M293.5 265v2M294.5 265v2M295.5 265v2M296.5 265v2M297.5 265v2M298.5 265v2M299.5 265v2M300.5 265v2M301.5 265v2M302.5 265v2M303.5 265v2M304.5 265v2M305.5 265v2M306.5 265v2M307.5 265v2M308.5 265v2M309.5 265v2M310.5 265v2M311.5 265v2M312.5 265v2M313.5 265v2M314.5 265v2M315.5 265v2M316.5 265v2M317.5 265v2M318.5 265v2M319.5 255v11M320.5 260v11M321.5 258v3M322.5 257v2M323.5 255v3M324.5 253v3M325.5 252v2M326.5 251v2M327.5 250v2M328.5 249v2M329.5 248v2M330.5 247v2M331.5 246v2M332 246.5h1M333.5 245v2M334.5 244v2M335.5 243v2M336.5 242v2M337.5 241v2M338.5 241v2M339.5 240v2M340.5 239v2M341.5 238v2M342 238.5h1M343.5 237v2M344 237.5h1M345.5 236v2M346 236.5h1M347.5 235v2M348.5 234v2M349 234.5h1M350.5 233v2M351.5 232v2M352.5 232v2M353.5 231v2M354.5 230v3M355.5 230v2M356 230.5h1M357.5 229v2M358.5 228v2M359.5 228v2M360.5 228v2M361.5 227v2M362 227.5h3M365.5 226v2M366.5 226v2M367.5 226v2M368.5 226v2M369 226.5h4M373.5 225v2M374.5 220v6M375.5 224v2M376 224.5h1M377.5 223v2M378 223.5h1M379.5 222v2M380.5 221v2M381.5 220v2M382.5 219v2M383.5 217v3M384.5 217v2M385 218.5h4M389.5 217v2M390.5 217v2M391.5 216v2M392.5 216v2M393 216.5h2M395.5 215v2M396.5 215v2M397 215.5h1M398.5 214v2M399.5 214v2M400 214.5h3M403.5 213v2M404 213.5h4M408.5 212v2M409.5 212v2M410.5 212v2M411 212.5h3M414.5 211v2M415.5 211v2M416 211.5h3M419.5 210v2M420.5 210v2M421.5 210v2M422.5 210v2M423.5 210v2M424 210.5h5M429.5 209v2M430.5 209v2M431.5 209v2M432 209.5h5M437.5 208v2M438.5 208v2M439 209.5h1M440.5 208v2M441.5 208v2M442 208.5h6M448.5 207v2M449.5 207v2M450.5 207v2M451 207.5h1M452.5 207v2M453 207.5h9M462.5 206v2M463 207.5h2M465.5 206v2M466.5 206v2M467.5 206v2M468.5 206v2M469.5 206v2M470.5 206v2M471.5 206v2M472.5 206v2M473.5 206v2M474 206.5h3M477.5 205v2M478.5 205v2M479 206.5h1M480.5 206v2M481.5 207v2M482.5 208v3M483.5 210v3M484.5 212v2M485.5 213v2M486.5 214v2M487.5 215v2M488.5 216v2M489.5 217v2M490.5 218v2M491 219.5h1M492.5 219v2M493.5 220v2M494.5 221v2M495.5 221v2M496.5 222v2M497.5 223v2M498.5 224v2M499.5 225v2M500.5 226v3M501.5 227v2M502.5 227v2M503.5 227v2M504.5 227v2M505 227.5h3M508.5 227v2M509.5 227v2M510 228.5h2M512.5 228v2M513 229.5h2M515.5 229v2M516.5 229v2M517 230.5h1M518.5 230v2M519 231.5h3M522.5 231v2M523.5 231v2M524 232.5h1M525.5 231v2M526.5 231v2M527.5 231v2M528 232.5h7M535.5 232v2M536 232.5h1M537.5 232v2M538.5 232v2M539.5 232v2M540 232.5h1M541.5 232v2M542.5 232v2M543.5 232v2M544.5 232v2M545.5 232v2M546 233.5h15M561.5 233v2M562 233.5h6M568.5 233v2M569.5 233v2M570.5 233v2M571.5 233v2M572 233.5h6M578.5 233v2M579.5 233v2M580 233.5h2M582.5 232v2M583 232.5h1M584.5 231v2M585.5 231v2M586.5 231v2M587.5 231v2M588.5 231v2M589.5 231v2M590 232.5h3M593.5 232v2M594.5 232v2M595.5 232v2M596.5 232v2M597 233.5h3M600.5 233v2M601.5 233v2M602.5 233v2M603.5 233v2M604.5 233v2M605.5 233v2M606.5 233v2M607.5 233v3M608.5 234v2M609.5 234v2M610.5 234v2M611.5 234v2M612.5 234v2M613.5 234v2M614.5 234v3M615.5 234v3M616.5 235v2M617.5 235v2M618.5 235v2M619.5 235v3M620.5 236v2M621.5 236v2M622.5 236v2M623.5 236v2M624.5 236v3M625.5 236v2M626.5 236v2M627.5 236v2M628.5 235v3M629.5 235v3M630.5 235v2M631.5 235v2M632.5 235v2M633.5 235v2M634.5 235v3M635.5 235v2M636.5 235v2M637.5 235v2M638 236.5h1M639.5 235v2M640.5 235v2M641 236.5h1M642.5 236v2M643.5 236v2M644.5 236v2M645 236.5h4M649.5 236v2M650.5 236v2M651.5 236v2M652.5 236v2M653.5 236v2M654.5 236v2M655.5 236v2M656.5 236v2M657.5 236v2M658.5 236v2M659.5 236v2M660.5 236v2M661.5 236v2M662.5 237v2M663.5 236v3M664.5 236v3M665 237.5h1M666.5 237v2M667 237.5h1M668.5 237v2M669.5 237v2M670.5 237v2M671.5 237v3M672.5 239v4M673.5 241v2M674.5 240v3M675.5 240v2M676.5 240v2M677.5 240v2M678.5 239v3M679.5 239v2M680.5 239v2M681.5 239v2M682.5 239v2M683.5 239v2M684.5 239v2M685.5 239v2M686.5 239v2M687.5 239v2M688.5 239v2M689.5 239v2M690.5 239v2M691.5 239v2M692.5 239v2M693.5 239v2M694.5 239v2M695.5 239v2M696 239.5h1M697.5 239v2M698.5 239v2M699.5 238v3M700.5 238v3M701.5 238v3M702.5 238v2M703.5 238v2M704.5 238v3M705.5 238v2M706 239.5h1M707.5 239v2M708.5 239v2M709.5 239v2M710.5 239v2M711.5 239v2M712 239.5h1M713.5 239v2M714.5 239v2M715.5 239v2M716 240.5h2M718.5 239v2M719 239.5h1M720.5 239v2M721.5 239v2M722.5 239v2M723.5 239v2M724.5 239v2M725.5 239v2M726.5 239v2M727.5 239v2M728.5 239v2M729.5 239v2M730.5 239v2M731 239.5h1M732.5 238v2M733.5 238v2M734.5 238v2M735.5 238v2M736.5 238v2M737.5 238v2M738.5 238v2M739 238.5h1M740.5 237v2M741.5 237v2M742.5 237v2M743.5 236v3M744.5 236v2M745.5 235v3M746.5 235v2M747.5 235v2M748.5 234v2M749.5 234v2M750.5 234v2M751.5 234v2M752.5 234v2M753.5 234v2M754.5 234v2M755.5 234v2M756.5 234v2M757.5 234v2M758.5 234v2M759.5 234v2M760.5 234v2M761.5 234v2M762.5 234v2M763.5 234v2M764.5 234v2M765.5 234v2M766.5 234v2M767.5 234v2M768.5 234v2M769.5 234v2M770.5 234v2M771.5 234v2M772.5 234v2M773 235.5h4M777.5 234v2M778.5 235v2M779.5 234v3M780 235.5h1M781.5 235v2M782.5 235v2M783.5 235v2M784.5 235v2M785 235.5h2M787.5 235v2M788.5 235v2M789.5 235v2M790.5 235v2M791.5 235v2M792.5 235v2M793.5 235v2M794.5 235v2M795.5 235v2M796.5 235v2M797.5 235v2M798.5 235v2M799.5 235v2M800.5 235v2M801.5 235v2M802.5 235v2M803.5 235v2M804.5 234v2M805.5 234v2M806.5 234v2M807 234.5h1M808.5 234v2M809.5 233v2M810.5 233v2M811.5 233v2M812.5 233v2M813.5 233v2M814.5 233v2M815.5 233v2M816.5 233v2M817.5 234v2M818.5 234v2M819.5 234v2M820.5 234v2M821 235.5h1M822.5 235v2M823.5 235v2M824 236.5h1M825.5 235v2M826.5 236v2M827.5 236v2M828 236.5h1M829.5 235v2M830.5 235v2M831.5 235v2M832 235.5h1M833.5 234v2M834.5 234v2M835.5 234v2M836.5 234v2M837.5 234v2M838.5 234v2M839.5 233v2M840.5 233v2M841.5 233v2M842.5 233v2M843.5 233v2M844.5 233v2M845.5 233v2M846.5 233v2M847.5 233v2M848.5 233v2M849.5 234v2M850.5 234v2M851.5 234v2M852.5 234v2M853.5 233v2M854 233.5h1M855.5 233v2M856.5 232v2M857.5 232v2M858.5 232v3M859.5 233v2M860 234.5h2M862.5 234v2M863.5 234v2M864.5 234v3M865 236.5h3M868.5 235v2M869.5 235v2M870.5 235v2M871.5 234v2M872.5 234v2M873.5 233v2M874.5 233v2M875.5 232v2M876.5 232v2M877.5 231v3M878.5 232v2M879.5 232v3M880.5 233v2M881 234.5h1M882.5 234v2M883.5 234v2M884.5 235v2M885.5 236v2M886.5 236v2M887.5 236v2M888.5 236v2M889.5 236v2M890.5 235v2M891.5 235v2M892.5 235v2M893.5 234v3M894.5 234v2M895.5 233v3M896.5 233v2M897.5 233v2M898.5 233v2M899 234.5h1M900.5 234v2M901.5 235v2M902.5 235v2M903.5 235v3M904.5 236v2M905.5 236v2M906.5 236v2M907.5 235v3M908.5 235v2M909.5 233v3M910.5 233v2M911 233.5h1M912.5 231v3M913.5 232v2M914.5 233v2M915.5 234v2M916.5 234v3M917.5 235v2M918.5 235v3M919.5 236v2M920 236.5h1M921.5 235v2M922.5 235v2M923.5 234v2M924 234.5h1M925.5 233v2M926.5 232v21M927.5 231v3M928.5 229v3M929.5 229v2M930.5 230v2M931.5 230v2M932.5 230v3M933 231.5h1M934.5 231v2M935.5 232v2M936.5 232v2M937.5 233v2M938.5 233v2M939.5 232v2M940.5 232v2M941.5 232v2M942.5 232v2M943.5 231v2M944 232.5h1M945.5 232v2M946 233.5h1M947.5 233v2M948 234.5h1M949.5 234v2M950.5 235v2M951.5 235v3M952.5 236v2M953.5 236v2M954.5 236v2M955.5 235v2M956.5 235v2M957.5 235v2M958 235.5h1M959.5 234v2M960.5 234v2M961.5 234v2M962.5 234v2M963.5 234v2M964.5 234v2M965.5 235v2M966.5 235v2M967.5 235v2M968.5 235v2M969.5 235v2M970.5 235v2M971.5 235v2M972.5 235v2M973.5 232v27M974.5 229v4M975.5 227v3M976.5 226v2M977.5 226v2M978.5 226v2M979 226.5h1M980.5 225v2M981.5 225v2M982 226.5h1M983.5 226v2M984.5 226v2M985.5 226v2M986.5 227v2M987.5 227v2M988.5 227v2M989 228.5h1M990.5 228v2M991 229.5h1M992.5 229v2M993.5 229v3M994.5 230v2M995.5 230v3M996 232.5h1M997.5 232v2M998.5 232v3M999.5 233v2M1000.5 234v2M1001.5 234v3M1002.5 235v2M1003.5 236v2M1004.5 237v2M1005.5 238v2M1006.5 238v3M1007.5 239v2M1008.5 239v2M1009.5 238v2M1010.5 237v3M1011.5 236v2M1012.5 235v3M1013.5 235v2M1014.5 234v2M1015.5 234v2M1016.5 233v2M1017.5 233v2M1018.5 233v2M1019.5 234v3M1020.5 235v2M1021.5 235v3M1022.5 236v2M1023.5 237v2M1024.5 237v2M1025.5 238v2M1026.5 238v2M1027.5 237v2M1028.5 236v2M1029.5 236v2M1030.5 236v2M1031.5 237v3M1032.5 238v4M1033.5 240v3M1034.5 242v2M1035.5 241v3M1036.5 240v2M1037.5 239v3M1038.5 238v3M1039.5 237v2M1040.5 237v2M1041.5 237v2M1042.5 237v2M1043.5 237v2M1044.5 237v2M1045.5 237v3M1046.5 238v2M1047.5 238v2M1048.5 238v2M1049.5 238v2M1050.5 238v3M1051.5 238v2M1052.5 238v2M1053.5 238v2M1054.5 238v2M1055.5 238v2M1056.5 237v2M1057.5 237v3M1058 238.5h1M1059.5 237v2M1060.5 237v2M1061.5 237v2M1062.5 237v2M1063.5 237v2M1064.5 237v2M1065.5 237v2M1066.5 237v3M1067 238.5h1M1068.5 238v3M1069.5 239v2M1070.5 239v2M1071.5 239v3M1072.5 241v2M1073.5 241v2M1074.5 241v3M1075.5 241v3M1076 241.5h1M1077.5 239v3M1078.5 239v3M1079.5 238v2M1080.5 238v2M1081.5 237v2M1082.5 236v2M1083.5 236v2M1084.5 237v2M1085.5 237v2M1086 237.5h1M1087.5 237v2M1088.5 237v2M1089.5 237v2M1090 237.5h1M1091.5 237v2M1092.5 237v2M1093.5 238v2M1094.5 239v3M1095.5 240v3M1096.5 241v3M1097.5 242v2M1098.5 243v3M1099.5 245v2M1100.5 244v3M1101.5 243v3M1102.5 242v2M1103.5 241v2M1104.5 239v3M1105.5 239v2M1106.5 239v2M1107.5 238v2M1108.5 238v2M1109.5 238v2M1110.5 238v2M1111.5 239v3M1112.5 241v2M1113.5 239v34M1114.5 235v5M1115.5 231v5M1116.5 230v3M1117.5 231v2M1118.5 231v2M1119.5 231v2M1120 232.5h1M1121.5 232v2M1122.5 233v2M1123.5 233v2M1124.5 233v2M1125.5 233v2M1126.5 233v2M1127.5 233v2M1128 234.5h1M1129.5 233v2M1130.5 233v2M1131.5 233v2M1132.5 234v2M1133.5 234v2M1134.5 235v2M1135.5 235v2M1136.5 236v2M1137 237.5h1M1138.5 237v2M1139.5 237v2M1140.5 238v2M1141.5 238v2M1142.5 239v2M1143.5 239v2M1144.5 239v2M1145.5 239v2M1146.5 239v2M1147 239.5h1M1148.5 239v2M1149.5 239v2M1150.5 239v2M1151 239.5h1M1152.5 238v2M1153.5 239v2M1154.5 239v3M1155.5 240v2M1156.5 240v2M1157.5 240v3M1158.5 241v2M1159.5 241v3M1160.5 242v2M1161 243.5h1M1162.5 242v2M1163.5 242v2M1164.5 241v3M1165.5 241v3M1166.5 241v2M1167 241.5h1M1168.5 240v2M1169.5 240v2M1170 240.5h1M1171.5 239v2M1172.5 238v3M1173.5 238v2M1174.5 238v2M1175.5 237v2M1176.5 237v2M1177.5 237v3M1178.5 238v2M1179.5 238v2M1180 239.5h1M1181.5 239v2M1182.5 240v2M1183.5 240v2M1184.5 240v3M1185.5 241v2M1186.5 241v2M1187 242.5h1M1188.5 242v2M1189.5 243v2M1190.5 242v2M1191.5 242v2M1192.5 242v2M1193.5 242v2M1194.5 241v2M1195.5 240v3M1196.5 240v2M1197.5 240v2M1198.5 240v2M1199.5 239v2M1200.5 239v2M1201.5 240v2M1202.5 240v3M1203 241.5h1M1204.5 241v2M1205.5 242v2M1206.5 242v2M1207.5 242v2M1208.5 242v2M1209.5 241v2M1210.5 240v2M1211 240.5h1M1212.5 240v3M1213.5 242v2M1214.5 242v3M1215.5 242v2M1216.5 241v2M1217.5 239v3M1218.5 239v3M1219.5 241v2M1220.5 242v3M1221.5 244v2M1222.5 242v4M1223.5 242v2M1224.5 241v3M1225.5 240v2M1226.5 240v2M1227.5 241v2M1228.5 242v2M1229 243.5h1M1230.5 242v2M1231.5 241v3M1232.5 240v2M1233.5 239v2M1234.5 240v3M1235.5 241v3M1236.5 243v2M1237.5 242v2M1238.5 242v2M1239.5 241v2M1240.5 241v2M1241 241.5h1M1242.5 241v2M1243.5 242v2M1244.5 242v3M1245.5 243v2M1246.5 242v3M1247.5 241v3M1248.5 240v2M1249.5 239v2M1250.5 240v2M1251.5 241v2M1252.5 242v2M1253.5 243v2M1254.5 243v2M1255.5 242v2M1256.5 241v3M1257.5 240v3M1258 241.5h1M1259.5 241v3M1260 243.5h1M1261.5 243v2M1262.5 242v2M1263.5 242v2M1264.5 240v3M1265.5 240v2M1266.5 240v3M1267.5 241v2M1268.5 242v2M1269.5 243v2M1270.5 242v2M1271.5 241v2M1272.5 240v2M1273.5 240v3M1274.5 241v2M1275.5 242v2M1276.5 243v2M1277.5 243v2M1278.5 242v2M1279.5 241v3M1280 241.5h1M1281.5 241v2M1282.5 241v3M1283.5 242v2M1284.5 243v3M1285.5 243v3M1286.5 242v3M1287 242.5h1M1288.5 240v3M1289 241.5h2M1291.5 241v3M1292.5 242v3M1293.5 243v2M1294.5 242v3M1295.5 240v4M1296.5 240v3M1297.5 242v4M1298.5 244v2M1299.5 244v2M1300.5 237v40M1301.5 230v8M1302.5 230v4M1303.5 233v4M1304.5 224v13M1305.5 221v4M1306.5 219v3M1307.5 217v3M1308.5 215v3M1309.5 206v10M1310.5 203v4M1311.5 205v3M1312.5 207v6M1313.5 212v5M1314.5 216v5M1315.5 220v2M1316.5 221v2M1317.5 222v3M1318.5 224v2M1319.5 225v3M1320.5 227v3M1321.5 229v10M1322.5 237v6M1323.5 228v43M1324.5 219v10M1325.5 211v9M1326.5 204v8M1327.5 204v3M1328.5 206v4M1329.5 209v3M1330.5 211v3M1331.5 213v5M1332.5 217v11M1333.5 226v11M1334.5 212v15M1335.5 204v9M1336.5 201v4M1337.5 201v2M1338.5 202v17M1339.5 193v12M1340.5 187v7M1341.5 179v9M1342.5 165v15M1343.5 153v13M1344.5 143v11M1345.5 138v6M1346.5 137v2M1347.5 138v3M1348.5 140v2M1349.5 141v4M1350.5 144v4M1351.5 147v6M1352.5 152v5M1353.5 156v6M1354.5 161v6M1355.5 166v6M1356.5 171v7M1357.5 177v7M1358.5 183v8M1359.5 190v7M1360.5 196v7M1361.5 202v7M1362.5 208v5M1363.5 212v6M1364.5 217v4M1365.5 220v5M1366.5 224v4M1367.5 227v3M1368.5 229v4M1369.5 232v3M1370.5 234v2M1371.5 235v3M1372.5 237v2M1373.5 238v2M1374.5 239v2M1375.5 240v2M1376.5 241v2M1377.5 242v2M1378.5 243v2M1379.5 243v2M1380.5 244v2M1381 245.5h1M1382.5 245v2M1383.5 246v2M1384.5 246v2M1385 247.5h1M1386.5 247v2M1387.5 247v2M1388 248.5h1M1389.5 248v2M1390.5 248v2M1391 249.5h4M1395.5 249v2M1396 249.5h1M1397.5 249v2M1398.5 250v2M1399.5 251v2M1400.5 252v2M1401.5 252v2M1402.5 252v4M1403.5 255v2M1404 256.5h33M1437.5 256v2M1438 257.5h1M1439.5 256v2M1440.5 256v2M1441 257.5h1M1442.5 256v2M1443.5 256v2M1444 257.5h4M1448.5 256v2M1449 257.5h30M1479.5 257v2M1480 257.5h4M1484.5 257v2M1485 257.5h1M1486.5 257v2M1487.5 257v2M1488 257.5h1M1489.5 257v2M1490.5 257v2M1491.5 257v2M1492.5 257v2M1493.5 257v2M1494.5 257v2M1495 257.5h1M1496.5 257v2M1497.5 257v2M1498.5 257v2M1499.5 257v2M1500.5 257v2M1501.5 257v2M1502 257.5h1M1503.5 257v2M1504.5 257v2M1505.5 257v2M1506.5 257v2M1507.5 257v2M1508.5 257v2M1509.5 257v2M1510.5 257v2M1511.5 257v2M1512.5 257v2M1513.5 257v2M1514.5 257v2M1515.5 257v2M1516.5 257v2M1517.5 257v2M1518.5 257v2M1519.5 257v2M1520.5 257v2M1521 258.5h2M1523.5 257v2M1524 258.5h1M1525.5 257v2M1526.5 257v2M1527.5 257v2M1528.5 257v2M1529.5 257v2M1530 258.5h13M1543.5 258v2M1544.5 258v2M1545 258.5h3M1548.5 258v2M1549.5 258v2M1550.5 258v2M1551.5 258v2M1552.5 258v2M1553.5 258v2M1554 258.5h1M1555.5 258v2M1556 258.5h1M1557.5 258v2M1558 259.5h1M1559.5 258v2M1560.5 258v2M1561.5 258v2M1562.5 258v2M1563.5 258v2M1564.5 258v2M1565.5 258v2M1566.5 258v2M1567.5 258v2M1568.5 258v2M1569.5 258v2M1570.5 258v2M1571.5 258v2M1572 258.5h1M1573.5 258v2M1574.5 258v2M1575.5 258v2M1576.5 258v2M1577.5 258v2M1578.5 258v2M1579.5 258v2M1580.5 258v2M1581.5 258v2M1582.5 258v2M1583.5 258v2M1584 258.5h2M1586.5 258v2M1587.5 258v2M1588.5 258v2M1589.5 258v2M1590.5 258v2M1591.5 258v2M1592.5 258v2M1593.5 258v2M1594.5 258v2M1595.5 258v2M1596.5 258v2M1597.5 258v2M1598.5 258v2M1599.5 258v3M1600.5 260v2M1601 261.5h2M1603.5 260v2M1604.5 260v2M1605.5 260v2M1606.5 260v2M1607 260.5h3M1610.5 259v2M1611.5 259v2M1612.5 259v2M1613 260.5h1M1614.5 259v2M1615 260.5h1M1616.5 259v2M1617.5 259v2M1618 260.5h1M1619.5 259v2M1620.5 259v2M1621.5 259v2M1622 260.5h1M1623.5 259v2M1624.5 259v2M1625 260.5h2M1627.5 259v2M1628.5 259v2M1629.5 259v2M1630 260.5h1M1631.5 259v2M1632.5 259v2M1633.5 259v2M1634 260.5h3M1637.5 259v2M1638.5 259v2M1639 260.5h1M1640.5 259v2M1641 260.5h5M1646.5 259v2M1647.5 259v2M1648.5 259v2M1649.5 257v4M1650 257.5h1M1651.5 257v2M1652.5 257v2M1653 258.5h8M1661.5 258v2M1662 258.5h1M1663.5 258v2M1664.5 258v2M1665.5 258v2M1666.5 258v2M1667.5 258v2M1668.5 258v2M1669.5 258v2M1670.5 258v2M1671.5 258v2M1672.5 258v2M1673.5 258v2M1674.5 258v2M1675.5 258v2M1676.5 258v2M1677.5 258v2M1678.5 258v2M1679.5 258v2M1680.5 258v2M1681.5 258v2M1682.5 258v2M1683.5 258v2M1684.5 258v2M1685.5 258v2M1686.5 258v2M1687.5 258v2M1688.5 258v2M1689.5 258v2M1690.5 258v2M1691.5 258v2M1692.5 258v2M1693.5 258v2M1694.5 258v2M1695.5 258v2M1696.5 258v2M1697.5 258v2M1698.5 258v2M1699.5 258v2M1700.5 258v2M1701.5 258v2M1702 259.5h1M1703.5 258v2M1704.5 258v2M1705.5 258v2M1706 259.5h1M1707.5 258v2M1708.5 258v2M1709.5 258v2M1710.5 258v2M1711.5 258v2M1712.5 258v2M1713.5 258v2M1714.5 258v2M1715.5 258v2M1716.5 258v2M1717.5 258v2M1718.5 258v2M1719.5 258v2M1720.5 258v2M1721.5 258v2M1722.5 258v2M1723.5 258v2M1724 259.5h3M1727.5 258v2M1728.5 258v2M1729.5 258v2M1730.5 258v2M1731.5 258v2M1732.5 258v2M1733.5 258v2M1734 259.5h1M1735.5 258v2M1736.5 258v2M1737.5 258v2M1738.5 258v2M1739.5 258v2M1740.5 258v2M1741 259.5h1M1742.5 259v3M1743.5 261v2M1744.5 261v2M1745.5 261v2M1746.5 261v2M1747.5 261v2M1748 261.5h2M1750.5 260v2" stroke="#f4e61c"/>
</g>
<path d="M3 267.5H1718" stroke="#c8c8c8" stroke-width="1" stroke-dasharray="5 5" shape-rendering="crispEdges"/>
<path d="M3 431.5H1718" stroke="#c8c8c8" stroke-width="1" stroke-dasharray="5 5" shape-rendering="crispEdges"/>
<path d="M3 735.5H1718" stroke="#c8c8c8" stroke-width="1" stroke-dasharray="5 5" shape-rendering="crispEdges"/>
<path d="M3 958.5H1718" stroke="#c8c8c8" stroke-width="1" stroke-dasharray="5 5" shape-rendering="crispEdges"/>
<path d="M55.5 95V290" stroke="#c8c8c8" stroke-width="1" stroke-dasharray="5 5" shape-rendering="crispEdges"/>
<path d="M55.5 292V524" stroke="#c8c8c8" stroke-width="1" stroke-dasharray="5 5" stroke-dashoffset="3" shape-rendering="crispEdges"/>
<path d="M55.5 526V758" stroke="#c8c8c8" stroke-width="1" stroke-dasharray="5 5" stroke-dashoffset="3" shape-rendering="crispEdges"/>
<path d="M55.5 760V993" stroke="#c8c8c8" stroke-width="1" stroke-dasharray="5 5" stroke-dashoffset="3" shape-rendering="crispEdges"/>
<rect x="1726.4" y="76" width="8" height="13" fill="#000"/>
<path d="M1710 65H1742.5Q1744.5 65 1744.5 67V99Z" fill="#4d4d4d"/>
<circle cx="1737.2" cy="71.7" r="3.9" fill="none" stroke="#a8a8a8" stroke-width="1.2"/>
<path d="M1734 74.9L1728.2 80.3" stroke="#a4a4a4" stroke-width="2.7" stroke-linecap="round"/>
<path d="M45 58H65.5L55.3 68Z" fill="#f08c1e"/>
<path d="M45 68H65.3V89H59.3L55.3 96L51.3 89H45Z" fill="#f08c1e"/>
<path d="M47.7 70.4H62.7V86.2H57.8L55.3 90.6L52.8 86.2H47.7Z" fill="#000"/>
<text x="55.2" y="84" text-anchor="middle" font-size="15" font-weight="bold" fill="#f08c1e">T</text>
<path d="M10 162.1H77L83.5 174.4L77 186.7H10Q6.8 186.7 6.8 183.7V165.1Q6.8 162.1 10 162.1Z" fill="#1e1b08" stroke="#f4e61c" stroke-width="1.6" stroke-linejoin="round"/>
<path d="M32.8 162.1V186.7" stroke="#f4e61c" stroke-width="1.6"/>
<text x="19.5" y="178.0" text-anchor="middle" fill="#f4e61c" font-size="12" class="cd">C 1</text>
<text x="56.5" y="178.0" text-anchor="middle" fill="#f4e61c" font-size="12" class="cd">20 V</text>
<path d="M10 396.5H77L83.5 408.8L77 421.1H10Q6.8 421.1 6.8 418.1V399.5Q6.8 396.5 10 396.5Z" fill="#141c08" stroke="#8cc82a" stroke-width="1.6" stroke-linejoin="round"/>
<path d="M32.8 396.5V421.1" stroke="#8cc82a" stroke-width="1.6"/>
<text x="19.5" y="412.4" text-anchor="middle" fill="#8cc82a" font-size="12" class="cd">C 4</text>
<text x="56.5" y="412.4" text-anchor="middle" fill="#8cc82a" font-size="12" class="cd">200 mV</text>
<text x="101.5" y="178.6" fill="#f4e61c" font-size="18">U_loop,coil</text>
<text x="101.5" y="412.8" fill="#8cc82a" font-size="18">U_Photod</text>
<path d="M3 734.8H6.5M42 734.8H54" stroke="#f08c1e" stroke-width="1" shape-rendering="crispEdges"/>
<path d="M9.5 722.5H28.5Q30.5 722.5 32 723.8L41.8 734.8L32 745.8Q30.5 747.1 28.5 747.1H9.5Q6.5 747.1 6.5 744.1V725.5Q6.5 722.5 9.5 722.5Z" fill="#1a1007" stroke="#f08c1e" stroke-width="1.5" stroke-linejoin="round"/>
<text x="23" y="737.8" text-anchor="middle" fill="#f08c1e" font-size="11.5">M 1</text>
<path d="M3 957.8H6.5M42 957.8H54" stroke="#712d8b" stroke-width="1" shape-rendering="crispEdges"/>
<path d="M9.5 945.5H28.5Q30.5 945.5 32 946.8L41.8 957.8L32 968.8Q30.5 970.1 28.5 970.1H9.5Q6.5 970.1 6.5 967.1V948.5Q6.5 945.5 9.5 945.5Z" fill="#712d8b" stroke="#712d8b" stroke-width="1.5" stroke-linejoin="round"/>
<text x="23" y="960.8" text-anchor="middle" fill="#fff" font-size="11.5">M 2</text>
<text x="52.8" y="739.6" fill="#f08c1e" font-size="18">B_t</text>
<text x="52.8" y="962.6" fill="#712d8b" font-size="18">I_p</text>
</svg>
<!-- overview bar -->
<svg class="abs" style="left:580px;top:32px" width="600" height="26" viewBox="580 32 600 26" font-family="'DejaVu Sans',sans-serif">
<path d="M593 36.5H586.5V52.5H593M1161 36.5H1167.5V52.5H1161" fill="none" stroke="#f4f4f4" stroke-width="1"/>
<rect x="587" y="44" width="580" height="2" fill="#adadad"/>
<path d="M596 33H611L603.5 38.5Z" fill="#f08c1e"/>
<path d="M597.5 40.5H609.5V52H606L603.5 55.5L601 52H597.5Z" fill="#000" stroke="#f08c1e" stroke-width="1.3"/>
<text x="603.5" y="50.3" font-size="10" font-weight="bold" text-anchor="middle" fill="#f08c1e">T</text>
</svg>
<!-- splitter dots -->
<svg class="abs" style="left:1758px;top:500px" width="8" height="26"><circle cx="4" cy="3.8" r="2" fill="#c8c8c8"/><circle cx="4" cy="12.3" r="2" fill="#c8c8c8"/><circle cx="4" cy="20.9" r="2" fill="#c8c8c8"/></svg>
<!-- logo -->
<svg class="abs" style="left:1780px;top:0" width="130" height="29" viewBox="1780 0 130 29">
<text y="25.4" x="1786 1797.2 1813.3 1829.4 1838.2 1848.2 1866.9 1882.6 1888" font-family="'Liberation Sans','DejaVu Sans',sans-serif" font-weight="bold" font-size="30" fill="#fff" stroke="#fff" stroke-width="1" stroke-linejoin="round">Tektronix</text>
<path d="M1815.3 25.8H1820.3L1831 9.3H1825.3Z" fill="#1fbfe2"/>
</svg>
<div id="side" class="abs"></div>
<div class="abs" style="left:1770px;top:30px;width:150px;text-align:center;font-weight:bold;font-size:14px;line-height:18px;color:#eee">Add New...</div>
<div class="sbtn" style="left:1778px;top:54px">Cursors</div>
<div class="sbtn" style="left:1850px;top:54px">Callout</div>
<div class="sbtn" style="left:1778px;top:100px">Measure</div>
<div class="sbtn" style="left:1850px;top:100px">Search</div>
<div class="sbtn" style="left:1778px;top:146px;line-height:16px">Results<br>Table</div>
<div class="sbtn" style="left:1850px;top:146px">Plot</div>
<div class="hr" style="left:1773px;top:189px;width:144px"></div>
<div class="sbtn" style="left:1778px;top:196px"><svg width="30" height="28" viewBox="0 0 30 28"><rect x="4.5" y="3.5" width="21" height="19" fill="none" stroke="#b0b0b0" stroke-width="1.8" stroke-dasharray="3.2 2.4"/><circle cx="16.5" cy="11" r="4.6" fill="none" stroke="#b0b0b0" stroke-width="1.6"/><path d="M13 14.5L8.5 18.5" stroke="#b0b0b0" stroke-width="2.4" stroke-linecap="round"/><path d="M21 18.5L28.5 22.8L25.2 23.6L26.8 27L25 27.8L23.4 24.4L21 26.6Z" fill="#b8b8b8"/></svg></div>
<div class="sbtn" style="left:1850px;top:196px">More...</div>
<div class="hr" style="left:1773px;top:241px;width:144px"></div>

<!-- bottom bar -->
<div class="badge" style="left:3px"><div class="hd" style="background:#4a4722;color:#f6ee36">Ch 1</div><span class="ln" style="top:19.2px">5 V/div</span><span class="ln" style="top:38.3px">1 MΩ</span><span class="ln" style="top:56.8px">200 kHz</span><span class="bw">B<sub>w</sub></span></div>
<div class="badge off" style="left:98px"><div class="hd" style="background:#278183;color:#14282a">Ch 2</div><span class="ln" style="top:19.2px">250 mV/div</span><span class="ln" style="top:38.3px">1 MΩ</span><span class="ln" style="top:56.8px">200 kHz</span><span class="bw">B<sub>w</sub></span></div>
<div class="badge off" style="left:193px"><div class="hd" style="background:#8d3747;color:#b4a0a4">Ch 3</div><span class="ln" style="top:19.2px">450 mV/div</span><span class="ln" style="top:38.3px">1 MΩ</span><span class="ln" style="top:56.8px">200 kHz</span><span class="bw">B<sub>w</sub></span></div>
<div class="badge" style="left:288px"><div class="hd" style="background:#374425;color:#8fd42a">Ch 4</div><span class="ln" style="top:19.2px">200 mV/div</span><span class="ln" style="top:38.3px">1 MΩ</span><span class="ln" style="top:56.8px">200 kHz</span><span class="bw">B<sub>w</sub></span></div>
<div class="badge" style="left:383px"><div class="hd" style="background:#483220;color:#f3931f">Math 1</div><span class="ln" style="top:19.2px">72.4 mT/div</span><span class="ln" style="top:38.3px">Intg(Ch2)…</span></div>
<div class="badge" style="left:478px"><div class="hd" style="background:#6c2c8a;color:#fff">Math 2</div><span class="ln" style="top:19.2px">1.070 kA/div</span><span class="ln" style="top:38.3px">-Intg(Ch3…</span></div>

<div class="tbtn" style="left:1023px"><i style="background:#f09020"></i><b style="top:31px;font-size:17.5px;line-height:24px">5</b></div>
<div class="tbtn" style="left:1068px"><i style="background:#2a2ac8"></i><b style="top:31px;font-size:17.5px;line-height:24px">6</b></div>
<div class="vr" style="left:1118px;top:1000px;height:78px"></div>
<div class="tbtn" style="left:1129px"><i style="background:#b02024"></i><b style="top:19.7px;font-size:15px;line-height:16px">Add<br>New<br>Math</b></div>
<div class="tbtn" style="left:1174px"><i style="background:#bcbcd8"></i><b style="top:19.7px;font-size:15px;line-height:16px">Add<br>New<br>Ref</b></div>
<div class="tbtn" style="left:1219px"><i style="background:#c050f0"></i><b style="top:19.7px;font-size:15px;line-height:16px">Add<br>New<br>Bus</b></div>
<div class="vr" style="left:1269px;top:1000px;height:78px"></div>

<div class="info" style="left:1280px;width:200px"><div class="hd">Horizontal</div>
<span style="left:4px;top:18.8px">4 ms/div</span><span style="left:110px;top:18.8px">40 ms</span>
<span style="left:4px;top:37.8px">SR: 1 MS/s</span><span style="left:110px;top:37.8px">1 µs/pt</span>
<span style="left:4px;top:56.8px">RL: 40 kpts</span><span style="left:124px;top:56.8px">3%</span>
<svg style="position:absolute;left:109px;top:58px" width="11" height="14" viewBox="0 0 11 14"><path d="M1 1H10V9H7.5L5.5 12.5L3.5 9H1Z" fill="#000" stroke="#f08c1e" stroke-width="1.2"/><text x="5.5" y="8" font-size="7" font-weight="bold" fill="#fff" text-anchor="middle" font-family="'DejaVu Sans',sans-serif">T</text></svg>
</div>
<div class="info" style="left:1485px;width:160px"><div class="hd">Trigger</div>
<div style="position:absolute;left:4px;top:21px;width:30px;height:16px;border:1px solid #000;border-radius:5px;background:#2424c4;color:#fff;text-align:center;font-size:14px;line-height:13px">6</div>
<svg style="position:absolute;left:43px;top:23px" width="18" height="13"><path d="M1 11.5H5L12 1.5H17" fill="none" stroke="#5a5aa0" stroke-width="1.2"/></svg>
<span style="left:70px;top:18.8px">3 V</span>
</div>
<div class="info" style="left:1650px;width:150px"><div class="hd">Acquisition</div>
<span style="left:4px;top:18.8px">Manual,</span><span style="left:85px;top:18.8px">Analyze</span>
<span style="left:4px;top:37.8px">High Res: 16 bits</span>
<span style="left:4px;top:56.8px">Single: 0 /1</span>
</div>
<div class="vr" style="left:1811px;top:1000px;height:78px"></div>
<div class="abs" style="left:1822px;top:999px;width:90px;height:36px;border-radius:6px;background:#f81d25;border:1px solid #7a3030;color:#fff;font-weight:bold;font-size:12px;line-height:32px;text-align:center">Preview</div>
<div class="abs" style="left:1822px;top:1040px;width:90px;height:39px;border-radius:4px;background:#c9c9c9;color:#000;font-family:'DejaVu Sans Condensed','DejaVu Sans',sans-serif;font-size:14.5px;line-height:16.4px;padding:2.8px 0 0 3px;white-space:nowrap">13 May 2025<br>10:43:53 AM</div>
</div>
</body>
</html>
